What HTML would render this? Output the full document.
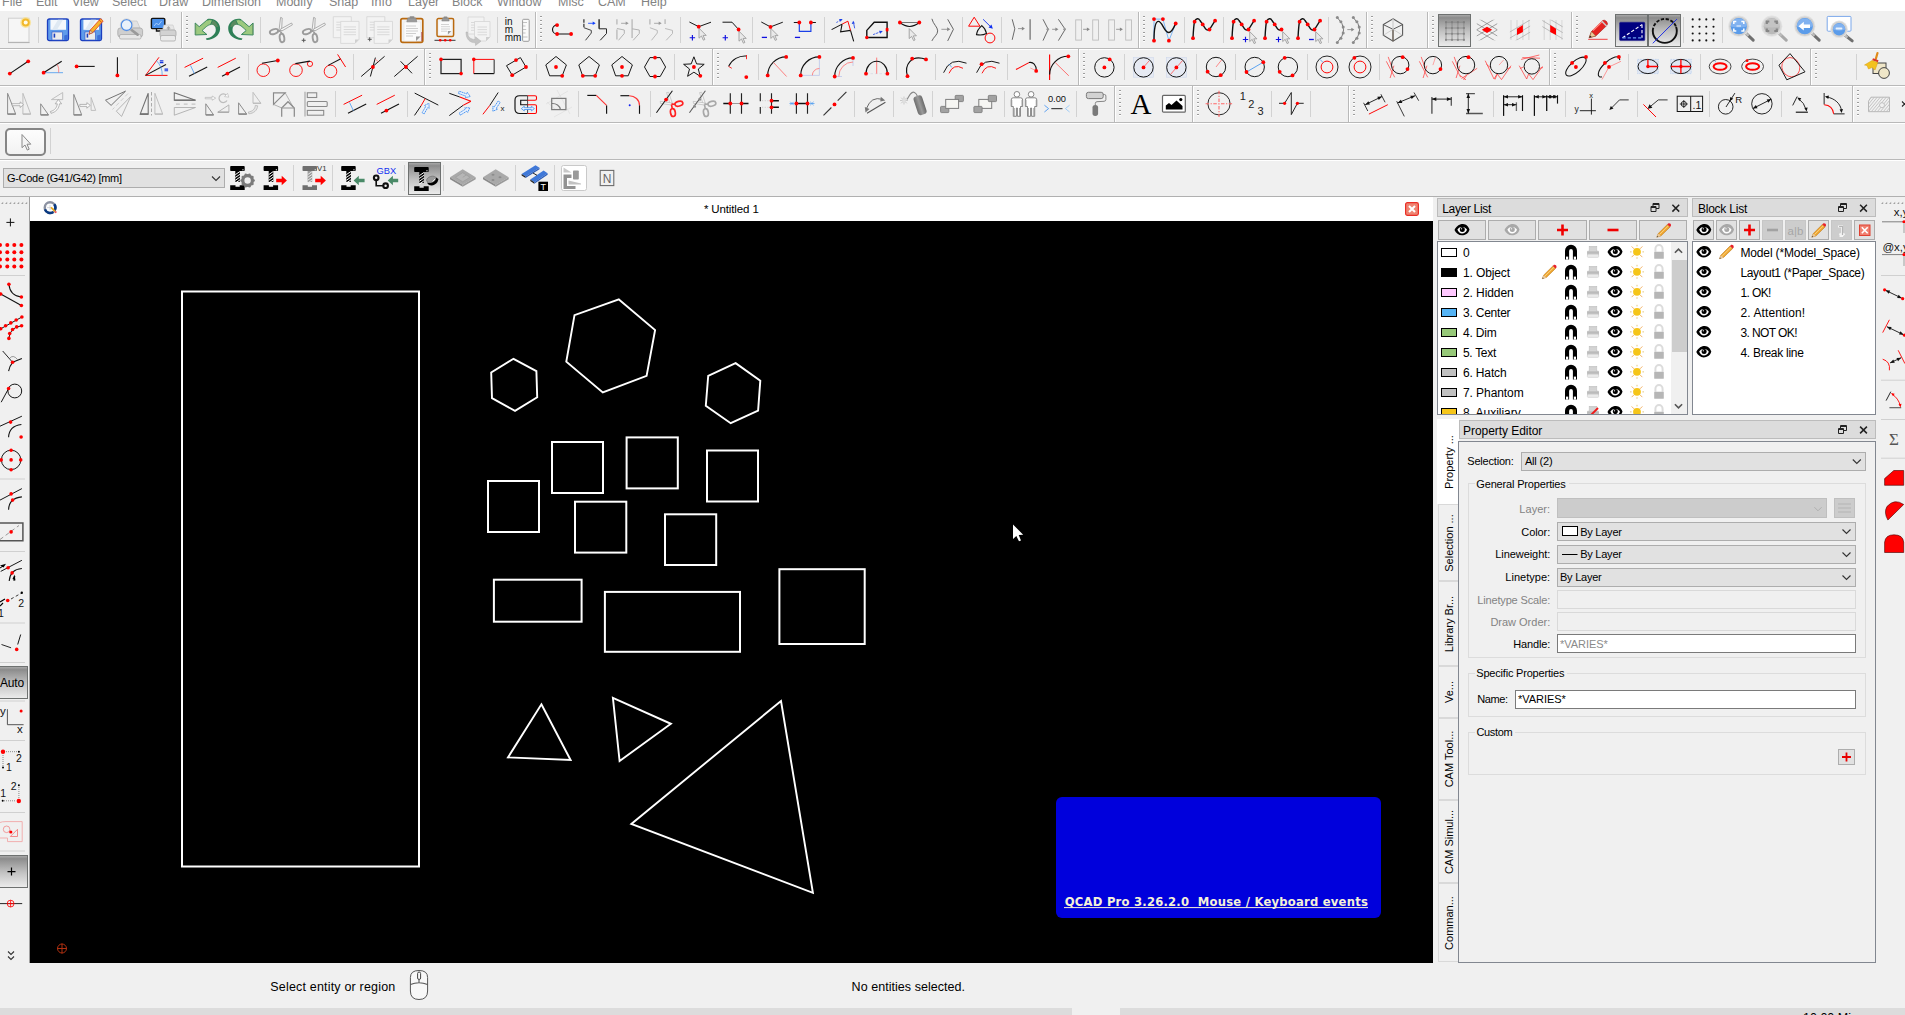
<!DOCTYPE html><html><head><meta charset="utf-8"><title>QCAD</title><style>
*{box-sizing:border-box;margin:0;padding:0}
html,body{width:1905px;height:1015px;overflow:hidden;background:#f0f0f0;font-family:"Liberation Sans",sans-serif;font-size:12px;color:#000}
.abs{position:absolute}
#menubar{position:absolute;left:0;top:0;width:1905px;height:11px;background:#fff;overflow:hidden}
#menubar span{position:absolute;top:-5px;font-size:12.5px;color:#838383;white-space:nowrap}
.hl{position:absolute;left:0;width:1905px;height:1px;background:#b9b9b9}
.hl2{position:absolute;left:0;width:1905px;height:1px;background:#fff}
.vs{position:absolute;width:1px;background:#b9b9b9;border-right:0}
.vs2{position:absolute;width:1px;background:#fff}
.sep{position:absolute;width:1px;height:26px;background:#d2d2d2}
.hd{position:absolute;width:2px;height:26px;background-image:repeating-linear-gradient(to bottom,#9c9c9c 0,#9c9c9c 1.5px,#fff 1.5px,#fff 2.5px,transparent 2.5px,transparent 4px)}
.pressed{position:absolute;border:1px solid #6e7170;background:linear-gradient(#a8a8a8 0,#8b8b8b 9%,#939393 14%,#c4c4c4 55%,#ebebeb 100%)}
#canvas{position:absolute;left:30px;top:221px;width:1403px;height:742px;background:#000}
#dochead{position:absolute;left:30px;top:197px;width:1403px;height:24px;background:#fff}
#doctitle{position:absolute;left:0;width:1403px;top:6px;text-align:center;font-size:11px;color:#000;letter-spacing:0px}
.ptitle{position:absolute;height:18px;background:#dcdcdc;border:1px solid #bcbcbc;font-size:12px;line-height:16px;padding-left:4px;white-space:nowrap}
.list{position:absolute;background:#fff;border:1px solid #828790;overflow:hidden}
.tbtn{position:absolute;height:20px;top:220px;background:#e1e1e1;border:1px solid #adadad}
.row{position:absolute;left:0;height:20px;line-height:20px;font-size:12px;white-space:nowrap}
.sw{position:absolute;left:3px;width:16px;height:9px;border:1px solid #000}
.lbl{position:absolute;font-size:11px;white-space:nowrap;text-align:right;color:#000}
.combo{position:absolute;background:#e1e1e1;border:1px solid #adadad;font-size:11px;line-height:17px;padding-left:4px;white-space:nowrap}
.edit{position:absolute;background:#fff;border:1px solid #7a7a7a;font-size:11px;line-height:17px;padding-left:3px;color:#000}
.grp{position:absolute;border:1px solid #dcdcdc}
.grp b{position:absolute;top:-8px;left:6px;background:#f0f0f0;padding:0 2px;font-weight:normal;font-size:11px;white-space:nowrap}
.vtab{position:absolute;left:1438px;width:20px;border:1px solid #d9d9d9;border-right:0;background:#f0f0f0}
.vtab span{position:absolute;left:50%;top:50%;transform:translate(-50%,-50%) rotate(-90deg);white-space:nowrap;font-size:11px}
</style></head><body><div id="menubar"><span style="left:2px">File</span><span style="left:36px">Edit</span><span style="left:72px">View</span><span style="left:112px">Select</span><span style="left:159px">Draw</span><span style="left:202px">Dimension</span><span style="left:276px">Modify</span><span style="left:329px">Snap</span><span style="left:371px">Info</span><span style="left:408px">Layer</span><span style="left:452px">Block</span><span style="left:497px">Window</span><span style="left:558px">Misc</span><span style="left:598px">CAM</span><span style="left:641px">Help</span></div><div class="hl" style="top:48px"></div><div class="hl2" style="top:49px"></div><div class="hl" style="top:85px"></div><div class="hl2" style="top:86px"></div><div class="hl" style="top:122px"></div><div class="hl2" style="top:123px"></div><div class="hl" style="top:159px"></div><div class="hl2" style="top:160px"></div><div class="hl" style="top:196px;background:#b0b0b0"></div><div class="sep" style="left:38px;top:17px"></div><div class="sep" style="left:110px;top:17px"></div><div class="vs" style="left:181px;top:12px;height:36px"></div><div class="vs2" style="left:182px;top:12px;height:36px"></div><div class="hd" style="left:186px;top:16px;height:28px"></div><div class="sep" style="left:260px;top:17px"></div><div class="sep" style="left:497px;top:17px"></div><div class="vs" style="left:535px;top:12px;height:36px"></div><div class="vs2" style="left:536px;top:12px;height:36px"></div><div class="hd" style="left:540px;top:16px;height:28px"></div><div class="sep" style="left:680px;top:17px"></div><div class="sep" style="left:752px;top:17px"></div><div class="sep" style="left:824px;top:17px"></div><div class="sep" style="left:962px;top:17px"></div><div class="sep" style="left:1001px;top:17px"></div><div class="vs" style="left:1138px;top:12px;height:36px"></div><div class="vs2" style="left:1139px;top:12px;height:36px"></div><div class="hd" style="left:1143px;top:16px;height:28px"></div><div class="sep" style="left:1184px;top:17px"></div><div class="sep" style="left:1223px;top:17px"></div><div class="sep" style="left:1328px;top:17px"></div><div class="vs" style="left:1366px;top:12px;height:36px"></div><div class="vs2" style="left:1367px;top:12px;height:36px"></div><div class="hd" style="left:1371px;top:16px;height:28px"></div><div class="vs" style="left:1427px;top:12px;height:36px"></div><div class="vs2" style="left:1428px;top:12px;height:36px"></div><div class="hd" style="left:1432px;top:16px;height:28px"></div><div class="pressed" style="left:1438px;top:14px;width:33px;height:33px"></div><div class="vs" style="left:1571px;top:12px;height:36px"></div><div class="vs2" style="left:1572px;top:12px;height:36px"></div><div class="hd" style="left:1576px;top:16px;height:28px"></div><div class="pressed" style="left:1615px;top:14px;width:33px;height:33px"></div><div class="pressed" style="left:1648px;top:14px;width:33px;height:33px"></div><div class="sep" style="left:1683px;top:17px"></div><div class="sep" style="left:1722px;top:17px"></div><div class="sep" style="left:137px;top:54px"></div><div class="sep" style="left:176px;top:54px"></div><div class="sep" style="left:248px;top:54px"></div><div class="sep" style="left:353px;top:54px"></div><div class="vs" style="left:424px;top:49px;height:36px"></div><div class="vs2" style="left:425px;top:49px;height:36px"></div><div class="hd" style="left:429px;top:53px;height:28px"></div><div class="sep" style="left:536px;top:54px"></div><div class="sep" style="left:674px;top:54px"></div><div class="vs" style="left:712px;top:49px;height:36px"></div><div class="vs2" style="left:713px;top:49px;height:36px"></div><div class="hd" style="left:717px;top:53px;height:28px"></div><div class="sep" style="left:758px;top:54px"></div><div class="sep" style="left:896px;top:54px"></div><div class="sep" style="left:935px;top:54px"></div><div class="sep" style="left:1007px;top:54px"></div><div class="vs" style="left:1078px;top:49px;height:36px"></div><div class="vs2" style="left:1079px;top:49px;height:36px"></div><div class="hd" style="left:1083px;top:53px;height:28px"></div><div class="sep" style="left:1124px;top:54px"></div><div class="sep" style="left:1196px;top:54px"></div><div class="sep" style="left:1235px;top:54px"></div><div class="sep" style="left:1307px;top:54px"></div><div class="sep" style="left:1379px;top:54px"></div><div class="vs" style="left:1549px;top:49px;height:36px"></div><div class="vs2" style="left:1550px;top:49px;height:36px"></div><div class="hd" style="left:1554px;top:53px;height:28px"></div><div class="sep" style="left:1628px;top:54px"></div><div class="sep" style="left:1700px;top:54px"></div><div class="sep" style="left:1772px;top:54px"></div><div class="vs" style="left:1810px;top:49px;height:36px"></div><div class="vs2" style="left:1811px;top:49px;height:36px"></div><div class="hd" style="left:1815px;top:53px;height:28px"></div><div class="sep" style="left:1856px;top:54px"></div><div class="sep" style="left:335px;top:91px"></div><div class="sep" style="left:407px;top:91px"></div><div class="sep" style="left:578px;top:91px"></div><div class="sep" style="left:650px;top:91px"></div><div class="sep" style="left:854px;top:91px"></div><div class="sep" style="left:893px;top:91px"></div><div class="sep" style="left:932px;top:91px"></div><div class="sep" style="left:1004px;top:91px"></div><div class="sep" style="left:1076px;top:91px"></div><div class="vs" style="left:1114px;top:86px;height:36px"></div><div class="vs2" style="left:1115px;top:86px;height:36px"></div><div class="hd" style="left:1119px;top:90px;height:28px"></div><div class="vs" style="left:1192px;top:86px;height:36px"></div><div class="vs2" style="left:1193px;top:86px;height:36px"></div><div class="hd" style="left:1197px;top:90px;height:28px"></div><div class="sep" style="left:1271px;top:91px"></div><div class="sep" style="left:1310px;top:91px"></div><div class="vs" style="left:1348px;top:86px;height:36px"></div><div class="vs2" style="left:1349px;top:86px;height:36px"></div><div class="hd" style="left:1353px;top:90px;height:28px"></div><div class="sep" style="left:1493px;top:91px"></div><div class="sep" style="left:1565px;top:91px"></div><div class="sep" style="left:1637px;top:91px"></div><div class="sep" style="left:1709px;top:91px"></div><div class="sep" style="left:1781px;top:91px"></div><div class="vs" style="left:1852px;top:86px;height:36px"></div><div class="vs2" style="left:1853px;top:86px;height:36px"></div><div class="hd" style="left:1857px;top:90px;height:28px"></div><div class="sep" style="left:293px;top:165px"></div><div class="sep" style="left:332px;top:165px"></div><div class="sep" style="left:404px;top:165px"></div><div class="pressed" style="left:408px;top:162px;width:33px;height:33px"></div><div class="sep" style="left:443px;top:165px"></div><div class="sep" style="left:515px;top:165px"></div><div class="sep" style="left:554px;top:165px"></div><div class="abs" style="left:5px;top:128px;width:41px;height:28px;border:2px solid #858585;border-radius:5px;background:linear-gradient(#fdfdfd,#f2f2f2)"></div><div class="sep" style="left:50px;top:128px"></div><div class="combo" style="left:3px;top:168px;width:222px;height:20px;font-size:11px;letter-spacing:-.3px;line-height:18px;padding-left:3px">G-Code (G41/G42) [mm]</div><svg class="abs" style="left:0;top:0" width="1905" height="197" viewBox="0 0 1905 197"><g transform="translate(7.0 18.0)"><defs><linearGradient id="pg" x1="0" y1="0" x2="1" y2="1"><stop offset="0" stop-color="#fff"/><stop offset="1" stop-color="#e4e4e4"/></linearGradient></defs><rect x="1.5" y="0.2" width="20.5" height="24" fill="#f6f6f6" stroke="#cfcfcf" stroke-width="1"/><path d="M1 24.6h21.5" stroke="#b0b0b0" stroke-width="1"/><circle cx="18.7" cy="4.5" r="5.4" fill="#f9e08a" opacity=".75"/><circle cx="18.7" cy="4.5" r="4" fill="#f2b92c"/><circle cx="18.7" cy="4.5" r="2" fill="#fffbe8"/></g><g transform="translate(46.0 18.0)"><rect x="1.5" y="1" width="21" height="21.6" rx="1.8" fill="#5f9bea" stroke="#1c3fbf" stroke-width="1.3"/><rect x="4.4" y="1.8" width="15.6" height="10" fill="#f4f8fc"/><path d="M6 11.8L12 1.8h5L11 11.8z" fill="#dfe9f3"/><rect x="6" y="14" width="10.5" height="8" fill="#ececec" stroke="#2a4fc8" stroke-width=".6"/><rect x="7.6" y="15.6" width="1.6" height="4" fill="#1c3fbf"/><path d="M18.2 17.5l3.5-1v5.5h-3.5z" fill="#3c6fd8"/></g><g transform="translate(79.0 18.0)"><rect x="1.5" y="1" width="21" height="21.6" rx="1.8" fill="#5f9bea" stroke="#1c3fbf" stroke-width="1.3"/><rect x="4.4" y="1.8" width="15.6" height="10" fill="#f4f8fc"/><path d="M6 11.8L12 1.8h5L11 11.8z" fill="#dfe9f3"/><rect x="6" y="14" width="10.5" height="8" fill="#ececec" stroke="#2a4fc8" stroke-width=".6"/><rect x="7.6" y="15.6" width="1.6" height="4" fill="#1c3fbf"/><path d="M18.2 17.5l3.5-1v5.5h-3.5z" fill="#3c6fd8"/><path d="M10 16.2l1.3-4.2L21.6 0.6l2.6 2.4L13.8 14.6z" fill="#f6b42c" stroke="#e0402a" stroke-width=".8"/><path d="M10 16.2l1.3-4.2 2.5 2.6z" fill="#e8c9a0" stroke="#a03020" stroke-width=".5"/><path d="M20.2 2.1l2.6 2.4" stroke="#e0402a" stroke-width="1"/></g><g transform="translate(118.0 18.0)"><path d="M3 10l3-7h13l3 7z" fill="#e2e2e2" stroke="#c4c4c4" stroke-width=".7"/><rect x="-0.2" y="10" width="24.8" height="9" rx="2.5" fill="#cfcfcf" stroke="#a8a8a8" stroke-width=".8"/><rect x="1.5" y="16.5" width="21.5" height="4.5" rx="1.5" fill="#e6e6e6" stroke="#ababab" stroke-width=".8"/><path d="M12.6 11.2l7 5.4" stroke="#9a9a9a" stroke-width="2.6" stroke-linecap="round"/><circle cx="8.6" cy="7.1" r="5.4" fill="#e9f1fa" stroke="#4b8be8" stroke-width="1.3"/><circle cx="8.6" cy="7.1" r="6.3" fill="none" stroke="#c9c9c9" stroke-width=".6"/></g><g transform="translate(151.0 18.0)"><rect x="0.4" y="0.4" width="13.4" height="10.2" rx="1.2" fill="#4a90ea" stroke="#111" stroke-width="1.4"/><path d="M3 8l2.5-3 2 2 3-4" stroke="#bcd8ff" stroke-width=".8" fill="none"/><path d="M5.5 11v2h4" stroke="#111" stroke-width="1.4" fill="none"/><path d="M11.5 12l1.5-5h9l1.5 5z" fill="#e6e6e6" stroke="#c8c8c8" stroke-width=".6"/><path d="M17.5 8l2.2 2.5h-1.4v2h-1.6v-2h-1.4z" fill="#a8a8a8"/><rect x="9" y="12" width="16" height="7" rx="2" fill="#d2d2d2" stroke="#a8a8a8" stroke-width=".8"/><rect x="9.5" y="17.5" width="15" height="5.5" rx="1.5" fill="#ebebeb" stroke="#ababab" stroke-width=".8"/></g><g transform="translate(195.0 18.0)"><path d="M12 1.200C19 -0.600 25.400 4.500 25.100 11C24.800 17.200 19 21.900 11.700 22L10.800 20.600C16.800 19.600 20.900 16 20.800 11.500C20.700 8 18.500 6.300 15.500 6.600z" fill="#2e8057"/><path d="M14.500 1.500C19 1.500 22.500 5 23 9L20 8.500C19 6.800 17.500 6.300 15.500 6.600L12.500 3z" fill="#5a8a60"/><path d="M0.200 5L4.200 8.700L11.800 2.200Q14.500 1 17.600 2L15.500 6.600C13.500 6.800 12 7.800 7.100 12.500L11.900 16.500L0.200 17z" fill="#9cc97f" stroke="#2e8057" stroke-width=".9" stroke-linejoin="miter"/><path d="M0.700 6V16.500" stroke="#6a9a68" stroke-width=".9"/></g><g transform="translate(229.0 18.0)"><g transform="translate(24.3 0) scale(-1 1)"><path d="M12 1.200C19 -0.600 25.400 4.500 25.100 11C24.800 17.200 19 21.900 11.700 22L10.800 20.600C16.800 19.600 20.900 16 20.800 11.500C20.700 8 18.500 6.300 15.500 6.600z" fill="#2e8057"/><path d="M14.500 1.500C19 1.500 22.500 5 23 9L20 8.500C19 6.800 17.500 6.300 15.500 6.600L12.500 3z" fill="#5a8a60"/><path d="M0.200 5L4.200 8.700L11.800 2.200Q14.500 1 17.600 2L15.500 6.600C13.500 6.800 12 7.800 7.100 12.500L11.900 16.500L0.200 17z" fill="#9cc97f" stroke="#2e8057" stroke-width=".9" stroke-linejoin="miter"/><path d="M0.700 6V16.500" stroke="#6a9a68" stroke-width=".9"/></g></g><g transform="translate(268.0 18.0)"><path d="M12.6 -0.6l1.6.6-.6 13-2.6-.6z" fill="#f4f4f4" stroke="#9c9c9c" stroke-width=".8"/><path d="M23.6 5l.8 1.8-10.600 6.200-1.600-1.700z" fill="#f4f4f4" stroke="#9c9c9c" stroke-width=".8"/><ellipse cx="6" cy="13.600" rx="4.300" ry="2.300" transform="rotate(-18 6 13.6)" fill="none" stroke="#9c9c9c" stroke-width="1.900"/><ellipse cx="14" cy="20" rx="2.300" ry="4.200" transform="rotate(-8 14 20)" fill="none" stroke="#9c9c9c" stroke-width="1.900"/><path d="M9.800 12.600l3 .8M13 14l.5 2" stroke="#9c9c9c" stroke-width="1.800"/></g><g transform="translate(301.0 18.0)"><path d="M12.6 -0.6l1.6.6-.6 13-2.6-.6z" fill="#f4f4f4" stroke="#9c9c9c" stroke-width=".8"/><path d="M23.6 5l.8 1.8-10.600 6.200-1.600-1.700z" fill="#f4f4f4" stroke="#9c9c9c" stroke-width=".8"/><ellipse cx="6" cy="13.600" rx="4.300" ry="2.300" transform="rotate(-18 6 13.6)" fill="none" stroke="#9c9c9c" stroke-width="1.900"/><ellipse cx="14" cy="20" rx="2.300" ry="4.200" transform="rotate(-8 14 20)" fill="none" stroke="#9c9c9c" stroke-width="1.900"/><path d="M9.800 12.600l3 .8M13 14l.5 2" stroke="#9c9c9c" stroke-width="1.800"/><path d="M0.700 22.300h4M2.700 20.300v4" stroke="#555" stroke-width="1"/></g><g transform="translate(334.0 18.0)"><path d="M-0.7 -1.3h18v17l-4 4h-14z" fill="#f3f3f3" stroke="#d4d4d4" stroke-width=".8"/><path d="M2.3 4.2h12" stroke="#d6d6d6" stroke-width=".9"/><path d="M2.3 6.800000000000001h12" stroke="#d6d6d6" stroke-width=".9"/><path d="M2.3 9.4h12" stroke="#d6d6d6" stroke-width=".9"/><path d="M2.3 12.0h12" stroke="#d6d6d6" stroke-width=".9"/><path d="M6.7 3.4h18.3v18l-4 4h-14.3z" fill="#f3f3f3" stroke="#d4d4d4" stroke-width=".8"/><path d="M25.0 21.4l-4 4v-4z" fill="#cfcfcf"/><path d="M9.7 8.9h12.3" stroke="#d6d6d6" stroke-width=".9"/><path d="M9.7 11.5h12.3" stroke="#d6d6d6" stroke-width=".9"/><path d="M9.7 14.100000000000001h12.3" stroke="#d6d6d6" stroke-width=".9"/><path d="M9.7 16.700000000000003h12.3" stroke="#d6d6d6" stroke-width=".9"/></g><g transform="translate(367.5 18.0)"><path d="M-0.7 -1.3h18v17l-4 4h-14z" fill="#f3f3f3" stroke="#d4d4d4" stroke-width=".8"/><path d="M2.3 4.2h12" stroke="#d6d6d6" stroke-width=".9"/><path d="M2.3 6.800000000000001h12" stroke="#d6d6d6" stroke-width=".9"/><path d="M2.3 9.4h12" stroke="#d6d6d6" stroke-width=".9"/><path d="M2.3 12.0h12" stroke="#d6d6d6" stroke-width=".9"/><path d="M6.7 3.4h18.3v18l-4 4h-14.3z" fill="#f3f3f3" stroke="#d4d4d4" stroke-width=".8"/><path d="M25.0 21.4l-4 4v-4z" fill="#cfcfcf"/><path d="M9.7 8.9h12.3" stroke="#d6d6d6" stroke-width=".9"/><path d="M9.7 11.5h12.3" stroke="#d6d6d6" stroke-width=".9"/><path d="M9.7 14.100000000000001h12.3" stroke="#d6d6d6" stroke-width=".9"/><path d="M9.7 16.700000000000003h12.3" stroke="#d6d6d6" stroke-width=".9"/><path d="M0.200 21.300h4M2.200 19.300v4" stroke="#555" stroke-width="1"/></g><g transform="translate(400.0 18.0)"><rect x="0.800" y="0.600" width="22" height="23.800" rx="1.800" fill="#f2f2f2" stroke="#b9690f" stroke-width="1.700"/><path d="M4 4h16.500v14.500l-4.500 4.500h-12z" fill="#fbfbfb" stroke="#e0e0e0" stroke-width=".5"/><path d="M20.500 18.500l-4.500 4.500 0-4.500z" fill="#9a9a9a"/><path d="M21.800 14v9" stroke="#a0303a" stroke-width=".8"/><path d="M6 8h10M6 10.500h12M6 13h12M6 15.500h10M6 18h7" stroke="#c9c9c9" stroke-width=".9"/><path d="M6.800 3.800l1-3.800h8l1 3.800z" fill="#9b9b9b" stroke="#7d7d7d" stroke-width=".6"/><rect x="9.500" y="-1.800" width="5" height="2" rx="1" fill="#8a8a8a"/></g><g transform="translate(433.0 18.0)"><rect x="4" y="0.600" width="16.600" height="17.800" rx="1.500" fill="#f2f2f2" stroke="#b9690f" stroke-width="1.500"/><path d="M6.200 3.500h12.200v9.500l-3.500 3.500h-8.700z" fill="#fbfbfb"/><path d="M18.400 13l-3.500 3.500v-3.500z" fill="#9a9a9a"/><path d="M8 6.500h8M8 8.700h9M8 11h9M8 13.200h6" stroke="#c9c9c9" stroke-width=".8"/><path d="M8.800 3l.8-3h5.800l.8 3z" fill="#9b9b9b" stroke="#7d7d7d" stroke-width=".5"/><rect x="10.500" y="-1.600" width="4" height="1.800" rx=".9" fill="#8a8a8a"/><path d="M1.500 22.300h21" stroke="#222" stroke-width=".9"/><circle cx="7.2" cy="22.3" r="1.3" fill="#f00"/><circle cx="12.2" cy="22.3" r="1.3" fill="#f00"/><circle cx="17.2" cy="22.3" r="1.3" fill="#f00"/></g><g transform="translate(466.0 18.0)"><path d="M2 -1h16v13l-4 4h-12z" fill="#f3f3f3" stroke="#d4d4d4" stroke-width=".8"/><path d="M5 4.5h10" stroke="#d6d6d6" stroke-width=".9"/><path d="M5 7.1h10" stroke="#d6d6d6" stroke-width=".9"/><path d="M5 9.7h10" stroke="#d6d6d6" stroke-width=".9"/><path d="M5 12.3h10" stroke="#d6d6d6" stroke-width=".9"/><path d="M8.5 3.5h15.5v15.5l-4 4h-11.5z" fill="#f3f3f3" stroke="#d4d4d4" stroke-width=".8"/><path d="M24.0 19.0l-4 4v-4z" fill="#cfcfcf"/><path d="M11.5 9.0h9.5" stroke="#d6d6d6" stroke-width=".9"/><path d="M11.5 11.6h9.5" stroke="#d6d6d6" stroke-width=".9"/><path d="M11.5 14.2h9.5" stroke="#d6d6d6" stroke-width=".9"/><path d="M11.5 16.8h9.5" stroke="#d6d6d6" stroke-width=".9"/><path d="M1.500 14c0 5 3 7.500 8 7.500v-2.700l5.500 4.400-5.500 4.300v-2.700c-6 0-9.500-3.800-9.500-10.800z" fill="#c4c4c4" stroke="#b0b0b0" stroke-width=".5"/></g><g transform="translate(505.0 18.0)"><text x="-0.3" y="7.1" font-size="10" fill="#111" text-anchor="start" font-weight="normal" font-family="Liberation Sans, sans-serif">in</text><text x="-0.3" y="15" font-size="10" fill="#111" text-anchor="start" font-weight="normal" font-family="Liberation Sans, sans-serif">m</text><text x="-0.3" y="22.9" font-size="10" fill="#111" text-anchor="start" font-weight="normal" font-family="Liberation Sans, sans-serif">mm</text><rect x="17.600" y="1.300" width="6.600" height="22" rx="1" fill="#fafafa" stroke="#9a9a9a" stroke-width="1"/><path d="M18 4.500h4M18 8h2.500M18 11.500h3.200M18 15h2.500M18 19h4.500" stroke="#aaa" stroke-width=".7"/></g><g transform="translate(550.0 18.0)"><path d="M7.100 7.100A4.600 4.450 0 0 0 7.100 16H21.100" stroke="#111" stroke-width="1.15" fill="none" /><circle cx="7.1" cy="7.1" r="1.9" fill="#f00"/><circle cx="7.1" cy="16" r="1.9" fill="#f00"/><circle cx="21.1" cy="16" r="1.9" fill="#f00"/></g><g transform="translate(583.0 18.0)"><path d="M0.900 1.300V9.700" stroke="#333" stroke-width="1.23" fill="none" stroke-dasharray="3.500 1"/><path d="M0.900 9.700L8.300 12.400V15L2.500 22.300" stroke="#333" stroke-width="0.9" fill="none" /><path d="M16.100 1.300V10.800" stroke="#222" stroke-width="1.39" fill="none" /><path d="M16.100 10.800H23.500V15.500L17.200 22.300" stroke="#222" stroke-width="0.98" fill="none" /><path d="M5.100 5.300H11" stroke="#1040ff" stroke-width="0.82" fill="none" /><path d="M12.700 5.300l-3-1.700v3.400z" fill="#1040ff"/></g><g transform="translate(616.0 18.0)"><path d="M0.900 1.300V6.500M0.900 11.500V21.500" stroke="#b8b8b8" stroke-width="1.31" fill="none" /><path d="M0.900 10.500L8.300 12V15.500L2.500 22.300" stroke="#b0b0b0" stroke-width="0.98" fill="none" /><path d="M16.100 1.300V20" stroke="#b8b8b8" stroke-width="1.31" fill="none" /><path d="M16.100 10.800L23.300 12V15.500L17.200 22.300" stroke="#b0b0b0" stroke-width="0.98" fill="none" /><path d="M5.100 5.300H11" stroke="#999" stroke-width="0.82" fill="none" /><path d="M12.700 5.300l-3-1.700v3.400z" fill="#999"/></g><g transform="translate(649.0 18.0)"><path d="M0.900 1.300V6.500" stroke="#b8b8b8" stroke-width="1.31" fill="none" /><path d="M0.900 9.700L8.300 12.400V15L2.500 22.300" stroke="#b8b8b8" stroke-width="0.98" fill="none" /><path d="M16.100 1.300V6" stroke="#b8b8b8" stroke-width="1.31" fill="none" /><path d="M16.100 10.500L23.500 12.400V15.500L17.200 22.300" stroke="#b8b8b8" stroke-width="0.98" fill="none" /><path d="M5.100 5.300H11" stroke="#999" stroke-width="0.82" fill="none" /><path d="M12.700 5.300l-3-1.700v3.400z" fill="#999"/></g><g transform="translate(687.0 18.0)"><path d="M2.400 4L11.700 8.700L24 4.200" stroke="#111" stroke-width="0.98" fill="none" /><path transform="translate(12 10.2) scale(0.95)" d="M0 0V10.500L2.600 8.200 4.600 12.600 6.200 11.900 4.300 7.600H7.600z" fill="#e9e9e9" stroke="#9a9a9a" stroke-width=".9"/><circle cx="11.7" cy="8.7" r="1.9" fill="#f00"/><path d="M2.7 19.7H8.100000000000001M5.4 17.0V22.4" stroke="#1010e0" stroke-width="1.15"/></g><g transform="translate(720.0 18.0)"><path d="M2.500 4.200H12L18.600 11.500" stroke="#111" stroke-width="0.98" fill="none" /><path transform="translate(19 13.2) scale(0.95)" d="M0 0V10.500L2.600 8.200 4.600 12.600 6.200 11.900 4.300 7.600H7.600z" fill="#e9e9e9" stroke="#9a9a9a" stroke-width=".9"/><circle cx="18.6" cy="11.5" r="1.9" fill="#f00"/><path d="M2.5999999999999996 19.7H8.0M5.3 17.0V22.4" stroke="#1010e0" stroke-width="1.15"/></g><g transform="translate(760.0 18.0)"><path d="M1.300 4L10.500 8.900L22.800 4.200" stroke="#111" stroke-width="0.98" fill="none" /><path transform="translate(10.8 10.4) scale(0.95)" d="M0 0V10.500L2.600 8.200 4.600 12.600 6.200 11.900 4.300 7.600H7.600z" fill="#e9e9e9" stroke="#9a9a9a" stroke-width=".9"/><circle cx="10.5" cy="8.9" r="1.9" fill="#f00"/><path d="M1.8000000000000003 19.4H7.0" stroke="#1010e0" stroke-width="1.3"/></g><g transform="translate(793.0 18.0)"><path d="M0.800 4.500H6.300M17.900 4.500H22.900" stroke="#111" stroke-width="0.98" fill="none" /><path d="M6.300 4.500V13.400H17.900V4.500" stroke="#1b40e8" stroke-width="1.15" fill="none" /><circle cx="6.3" cy="4.5" r="1.9" fill="#f00"/><circle cx="17.9" cy="4.5" r="1.9" fill="#f00"/><path d="M1.9 19.4H7.1" stroke="#1010e0" stroke-width="1.3"/></g><g transform="translate(832.0 18.0)"><path d="M-0.400 11.600L10.100 6.100M18.500 12.400L21.700 23.400M10.100 6.100L8.600 13.900L18.500 12.400" stroke="#111" stroke-width="1.07" fill="none" /><path d="M10.100 6.100L15.900 3.200L18.500 12.400" stroke="#f00" stroke-width="0.98" fill="none" /><path d="M4.400 4.500L8.500 2.300" stroke="#1b40e8" stroke-width="0.82" fill="none" stroke-dasharray="2 1"/><path d="M10.600 1l-3.600 0 1.600 2.800z" fill="#1b40e8"/><path d="M22.700 10.300L21.700 5.500" stroke="#1b40e8" stroke-width="0.82" fill="none" /><path d="M21.200 2.800l-1.500 3.200 3.100-.5z" fill="#1b40e8"/></g><g transform="translate(865.0 18.0)"><path d="M1.800 19.500V12.400L9.200 4.300H22.100V19.500z" stroke="#111" stroke-width="1.39" fill="none" /><circle cx="1.8" cy="19.5" r="1.7" fill="#f00"/><rect x="20.700" y="9.800" width="2.800" height="3.600" rx="1" fill="#f00"/><path d="M8.100 16.600L14.500 14.200" stroke="#1b40e8" stroke-width="0.82" fill="none" stroke-dasharray="2.400 .8"/><path d="M17.800 13.100l-3.800-.4 1.200 3.100z" fill="#1b40e8"/></g><g transform="translate(898.0 18.0)"><path d="M1.900 4.500H21.300" stroke="#333" stroke-width="0.66" fill="none" /><path d="M1.900 4.500Q11.600 12.400 21.300 4.500" stroke="#111" stroke-width="1.07" fill="none" /><path transform="translate(11.2 10.6) scale(0.95)" d="M0 0V10.500L2.600 8.200 4.600 12.600 6.200 11.900 4.300 7.600H7.600z" fill="#e9e9e9" stroke="#9a9a9a" stroke-width=".9"/><circle cx="1.9" cy="4.5" r="1.9" fill="#f00"/><circle cx="21.3" cy="4.5" r="1.9" fill="#f00"/></g><g transform="translate(930.0 18.0)"><path d="M1.900 0.800C3 6 7.700 9 7.700 12.900S3.500 19 1.900 22.900" stroke="#555" stroke-width="0.9" fill="none" /><path d="M17.700 1.300L23.400 11.300L17.700 22.900" stroke="#555" stroke-width="0.9" fill="none" /><path d="M11.400 11.300H19" stroke="#888" stroke-width="0.82" fill="none" /><path d="M20.300 11.300l-3.200-2v4z" fill="#888"/></g><g transform="translate(969.0 18.0)"><path d="M5.200 -0.800L-0.400 8.200H10.900z" stroke="#f00" stroke-width="0.98" fill="none" /><path d="M12.800 7.600Q8.200 11.500 7.500 16.600Q13 17.800 17.500 15.500Q16.500 10.500 12.800 7.600z" stroke="#111" stroke-width="1.15" fill="none" /><circle cx="21" cy="20" r="4.9" stroke="#f00" stroke-width="0.98" fill="none"/><path d="M14.100 1.300L21.500 8.600" stroke="#1030f0" stroke-width="0.9" fill="none" /><path d="M23.800 10.800l-1.300-4.300-3 3z" fill="#1030f0"/></g><g transform="translate(1009.0 18.0)"><path d="M3.200 1.300L5.800 10.800L3.200 21.800" stroke="#666" stroke-width="0.98" fill="none" /><path d="M9 10.600H14.500" stroke="#888" stroke-width="0.82" fill="none" /><path d="M15.900 10.600l-3-1.900v3.800z" fill="#888"/><path d="M21.100 1.300V21.800" stroke="#666" stroke-width="1.15" fill="none" /></g><g transform="translate(1042.0 18.0)"><path d="M1 1.300L6.200 11.300L1 22.600" stroke="#666" stroke-width="0.98" fill="none" /><path d="M16.400 1.300L23.200 11.300L16.400 22.600" stroke="#666" stroke-width="0.98" fill="none" /><path d="M10.100 11.300H15" stroke="#888" stroke-width="0.82" fill="none" /><path d="M16.400 11.300l-3-1.900v3.800z" fill="#888"/><circle cx="5.800" cy="11.300" r="1.300" fill="#999"/><circle cx="22.600" cy="11.300" r="1.300" fill="#999"/></g><g transform="translate(1075.0 18.0)"><rect x="0.7" y="1.9" width="5.8" height="20.2" stroke="#bdbdbd" stroke-width="0.9" fill="none" rx="0"/><rect x="17.7" y="1.9" width="5.8" height="20.2" stroke="#bdbdbd" stroke-width="0.9" fill="none" rx="0"/><path d="M8.100 11.300H13.500" stroke="#888" stroke-width="0.82" fill="none" /><path d="M14.900 11.300l-3-1.900v3.800z" fill="#888"/></g><g transform="translate(1108.0 18.0)"><rect x="0.7" y="1.9" width="5.8" height="20.2" stroke="#bdbdbd" stroke-width="0.9" fill="none" rx="0"/><rect x="17.7" y="1.9" width="5.8" height="20.2" stroke="#bdbdbd" stroke-width="0.9" fill="none" rx="0"/><path d="M8.100 11.300H13.500" stroke="#888" stroke-width="0.82" fill="none" /><path d="M14.900 11.300l-3-1.900v3.800z" fill="#888"/></g><g transform="translate(1153.0 18.0)"><path d="M1 22.700V1.100H9.900L15.900 22.700L22.700 5.500" stroke="#64a8f4" stroke-width="0.82" fill="none" /><path d="M1 22.700C1 12 2 3.400 5.400 3.400C9.500 3.400 11 14.500 15.900 14.500C19 14.500 21 9 22.700 5.500" stroke="#111" stroke-width="1.39" fill="none" /><circle cx="1" cy="1.1" r="1.9" fill="#f00"/><circle cx="9.9" cy="1.1" r="1.9" fill="#f00"/><circle cx="22.7" cy="5.5" r="1.9" fill="#f00"/><circle cx="1" cy="22.7" r="1.9" fill="#f00"/><circle cx="15.9" cy="22.7" r="1.9" fill="#f00"/></g><g transform="translate(1192.0 18.0)"><path d="M1 20.200C1.500 10 1.800 6 2.600 3.700C4 0 6.500 0 8 2.500L10.700 6.400C13 10 14.500 13.500 17.500 11.500L23.100 2.700" stroke="#111" stroke-width="1.39" fill="none" /><circle cx="1" cy="20.2" r="1.9" fill="#f00"/><circle cx="2.6" cy="3.7" r="1.9" fill="#f00"/><circle cx="10.7" cy="6.4" r="1.9" fill="#f00"/><circle cx="17.5" cy="11.5" r="1.9" fill="#f00"/><circle cx="23.1" cy="2.7" r="1.9" fill="#f00"/></g><g transform="translate(1231.0 18.0)"><path d="M1 20.200C1.500 10 1.800 6 2.600 3.700C4 0 6.500 0 8 2.500L10.700 6.400C13 10 14.500 13.500 17.500 11.500L23.100 2.700" stroke="#111" stroke-width="1.39" fill="none" /><path transform="translate(18.7 13.6) scale(0.95)" d="M0 0V10.500L2.600 8.200 4.600 12.600 6.200 11.900 4.300 7.600H7.600z" fill="#e9e9e9" stroke="#9a9a9a" stroke-width=".9"/><circle cx="1" cy="20.2" r="1.9" fill="#f00"/><circle cx="2.6" cy="3.7" r="1.9" fill="#f00"/><circle cx="10.7" cy="6.4" r="1.9" fill="#f00"/><circle cx="17.5" cy="11.5" r="1.9" fill="#f00"/><circle cx="23.1" cy="2.7" r="1.9" fill="#f00"/><path d="M11.8 21.5H17.2M14.5 18.8V24.2" stroke="#1010e0" stroke-width="1.15"/></g><g transform="translate(1264.0 18.0)"><path d="M1 20.200C1.500 10 1.800 6 2.600 3.700C4 0 6.500 0 8 2.500L10.700 6.400C13 10 14.500 13.500 17.500 11.500" stroke="#111" stroke-width="1.39" fill="none" /><path transform="translate(18.7 13.6) scale(0.95)" d="M0 0V10.500L2.600 8.200 4.600 12.600 6.200 11.900 4.300 7.600H7.600z" fill="#e9e9e9" stroke="#9a9a9a" stroke-width=".9"/><circle cx="1" cy="20.2" r="1.9" fill="#f00"/><circle cx="2.6" cy="3.7" r="1.9" fill="#f00"/><circle cx="10.7" cy="6.4" r="1.9" fill="#f00"/><circle cx="17.5" cy="11.5" r="1.9" fill="#f00"/><path d="M11.8 21.5H17.2M14.5 18.8V24.2" stroke="#1010e0" stroke-width="1.15"/></g><g transform="translate(1297.0 18.0)"><path d="M1 20.200C1.500 10 1.800 6 2.600 3.700C4 0 6.500 0 8 2.500L10.700 6.400C13 10 14.500 13.500 17.500 11.500L23.100 2.700" stroke="#111" stroke-width="1.39" fill="none" /><path transform="translate(18.7 13.6) scale(0.95)" d="M0 0V10.500L2.600 8.200 4.600 12.600 6.200 11.900 4.300 7.600H7.600z" fill="#e9e9e9" stroke="#9a9a9a" stroke-width=".9"/><circle cx="1" cy="20.2" r="1.9" fill="#f00"/><circle cx="2.6" cy="3.7" r="1.9" fill="#f00"/><circle cx="10.7" cy="6.4" r="1.9" fill="#f00"/><circle cx="17.5" cy="11.5" r="1.9" fill="#f00"/><circle cx="23.1" cy="2.7" r="1.9" fill="#f00"/><path d="M12.0 21.5H16.8" stroke="#1010e0" stroke-width="1.3"/></g><g transform="translate(1336.0 18.0)"><path d="M1.3 -0.500Q13.9 11.800 1.3 24.400" stroke="#777" stroke-width="0.98" fill="none" /><circle cx="1.3" cy="-0.5" r="1.500" fill="#8a8a8a"/><circle cx="4.9" cy="3.7" r="1.500" fill="#8a8a8a"/><circle cx="7.2" cy="9" r="1.500" fill="#8a8a8a"/><circle cx="7.2" cy="15" r="1.500" fill="#8a8a8a"/><circle cx="4.9" cy="20.3" r="1.500" fill="#8a8a8a"/><circle cx="1.3" cy="24.4" r="1.500" fill="#8a8a8a"/><path d="M17.3 -0.500Q29.9 11.800 17.3 24.400" stroke="#777" stroke-width="0.98" fill="none" /><circle cx="17.3" cy="-0.5" r="1.500" fill="#8a8a8a"/><circle cx="20.900000000000002" cy="3.7" r="1.500" fill="#8a8a8a"/><circle cx="23.200000000000003" cy="9" r="1.500" fill="#8a8a8a"/><circle cx="23.200000000000003" cy="15" r="1.500" fill="#8a8a8a"/><circle cx="20.900000000000002" cy="20.3" r="1.500" fill="#8a8a8a"/><circle cx="17.3" cy="24.4" r="1.500" fill="#8a8a8a"/><path d="M11.300 11.600H17" stroke="#888" stroke-width="0.82" fill="none" /><path d="M18.300 11.600l-3-1.900v3.800z" fill="#888"/></g><g transform="translate(1381.0 18.0)"><path d="M12 0.800L21.600 6.600V17.300L12 23.200L2.300 17.300V6.600z" stroke="#555" stroke-width="1.07" fill="none" /><path d="M12 11.300L2.300 6.600M12 11.300L21.600 6.600" stroke="#555" stroke-width="0.98" fill="none" /><path d="M12 11.300V23.200" stroke="#6b625a" stroke-width="1.56" fill="none" /><path d="M12 0.800V11.300" stroke="#cfcfcf" stroke-width="1.23" fill="none" /><path d="M12 11.300L2.300 17.300M12 11.300L21.600 17.300" stroke="#bdbdbd" stroke-width="0.66" fill="none" /></g><g transform="translate(1442.0 18.0)"><path d="M4 3V23M3 4.2H23" stroke="#7c7c7c" stroke-width="0.66" fill="none" /><path d="M10 3V23M3 10H23" stroke="#7c7c7c" stroke-width="0.66" fill="none" /><path d="M15.9 3V23M3 15.8H23" stroke="#7c7c7c" stroke-width="0.66" fill="none" /><path d="M21.9 3V23M3 21.8H23" stroke="#7c7c7c" stroke-width="0.66" fill="none" /><rect x="3" y="3.2" width="2" height="2" fill="#777" opacity=".5"/><rect x="3" y="9" width="2" height="2" fill="#777" opacity=".5"/><rect x="3" y="14.8" width="2" height="2" fill="#777" opacity=".5"/><rect x="3" y="20.8" width="2" height="2" fill="#777" opacity=".5"/><rect x="9" y="3.2" width="2" height="2" fill="#777" opacity=".5"/><rect x="9" y="9" width="2" height="2" fill="#777" opacity=".5"/><rect x="9" y="14.8" width="2" height="2" fill="#777" opacity=".5"/><rect x="9" y="20.8" width="2" height="2" fill="#777" opacity=".5"/><rect x="14.9" y="3.2" width="2" height="2" fill="#777" opacity=".5"/><rect x="14.9" y="9" width="2" height="2" fill="#777" opacity=".5"/><rect x="14.9" y="14.8" width="2" height="2" fill="#777" opacity=".5"/><rect x="14.9" y="20.8" width="2" height="2" fill="#777" opacity=".5"/><rect x="20.9" y="3.2" width="2" height="2" fill="#777" opacity=".5"/><rect x="20.9" y="9" width="2" height="2" fill="#777" opacity=".5"/><rect x="20.9" y="14.8" width="2" height="2" fill="#777" opacity=".5"/><rect x="20.9" y="20.8" width="2" height="2" fill="#777" opacity=".5"/></g><g transform="translate(1475.0 18.0)"><defs><clipPath id="isoc"><rect x="1.800" y="1.700" width="20.400" height="20.600"/></clipPath></defs><g clip-path="url(#isoc)"><path d="M0 -1.6L24 12.8M0 12.8L24 -1.6" stroke="#666" stroke-width="0.57" fill="none" /><path d="M0 4.6L24 19.0M0 19.0L24 4.6" stroke="#666" stroke-width="0.57" fill="none" /><path d="M0 10.8L24 25.200000000000003M0 25.200000000000003L24 10.8" stroke="#666" stroke-width="0.57" fill="none" /></g><path d="M6.800 11.800L12 8.700L17.200 11.800L12 14.900z" fill="#f00"/></g><g transform="translate(1508.0 18.0)"><g clip-path="url(#isoc)"><path d="M3 2V22" stroke="#d0d0d0" stroke-width="0.9" fill="none" /><path d="M9 2V22" stroke="#d0d0d0" stroke-width="0.9" fill="none" /><path d="M14.9 2V22" stroke="#d0d0d0" stroke-width="0.9" fill="none" /><path d="M20.9 2V22" stroke="#d0d0d0" stroke-width="0.9" fill="none" /><path d="M1.500 14.2L22.500 1.6999999999999993" stroke="#8a8a8a" stroke-width="0.49" fill="none" /><path d="M1.500 20.3L22.500 7.800000000000001" stroke="#8a8a8a" stroke-width="0.49" fill="none" /><path d="M1.500 26.4L22.500 13.899999999999999" stroke="#8a8a8a" stroke-width="0.49" fill="none" /></g><path d="M9 10.800L14.900 7.100V13.900L9 16.900z" fill="#f00"/></g><g transform="translate(1540.5 18.0)"><g clip-path="url(#isoc)"><path d="M3.7 2V22" stroke="#d0d0d0" stroke-width="0.9" fill="none" /><path d="M9.7 2V22" stroke="#d0d0d0" stroke-width="0.9" fill="none" /><path d="M15.5 2V22" stroke="#d0d0d0" stroke-width="0.9" fill="none" /><path d="M21.5 2V22" stroke="#d0d0d0" stroke-width="0.9" fill="none" /><path d="M1.500 -3.5L22.500 9.0" stroke="#8a8a8a" stroke-width="0.49" fill="none" /><path d="M1.500 2.3L22.500 14.8" stroke="#8a8a8a" stroke-width="0.49" fill="none" /><path d="M1.500 8.4L22.500 20.9" stroke="#8a8a8a" stroke-width="0.49" fill="none" /></g><path d="M9.700 7.100L15.500 10.800V16.900L9.700 13.900z" fill="#f00"/></g><g transform="translate(1586.0 18.0)"><path d="M2.200 21.300H21.600" stroke="#f04040" stroke-width="1"/><path d="M3.200 19.700L5.500 13.500L16.500 2.500Q18.500 1.500 20.500 3.500Q22.300 5.500 21 7.300L9.800 18z" fill="#e52320" stroke="#a01512" stroke-width=".6"/><path d="M7 12.500L17 2.800" stroke="#ff8a80" stroke-width="1.300"/><path d="M3.200 19.700L5.500 13.500L9.800 18z" fill="#e9c99a" stroke="#8a5a30" stroke-width=".5"/><path d="M3.200 19.700l.9-2.300 1.600 1.500z" fill="#222"/><path d="M15.800 3.200L20.600 8" stroke="#c9c9c9" stroke-width="1.600"/></g><g transform="translate(1620.0 18.0)"><rect x="-0.400" y="4.200" width="25.200" height="18.400" rx="1" fill="#000080" stroke="#22228a" stroke-width=".6"/><path d="M2.500 19.800L22 6.600" stroke="#fff" stroke-width="1.100" stroke-dasharray="3.300 2"/><path d="M22 6.600V19.800" stroke="#fff" stroke-width="1.100" stroke-dasharray="3.300 2"/><path d="M2.500 19.800H22" stroke="#6a9cf0" stroke-width="1.300" stroke-dasharray="3.200 2"/></g><g transform="translate(1652.8 18.0)"><g transform="translate(0 .9)"><path d="M0 12A12 12 0 0 0 24 12A12 12 0 0 0 23.300 8" stroke="#111" stroke-width="1.89" fill="none" /><path d="M0 12A12 12 0 0 1 23.300 8" stroke="#111" stroke-width="1.89" fill="none" stroke-dasharray="3.300 1.600"/><path d="M0 24.400L24.100 0.200" stroke="#1020e8" stroke-width="0.9" fill="none" /></g></g><g transform="translate(1691.0 18.0)"><circle cx="1.7" cy="1.4" r="1.050" fill="#111"/><circle cx="1.7" cy="8.7" r="1.050" fill="#111"/><circle cx="1.7" cy="15.5" r="1.050" fill="#111"/><circle cx="1.7" cy="22.4" r="1.050" fill="#111"/><circle cx="8.5" cy="1.4" r="1.050" fill="#111"/><circle cx="8.5" cy="8.7" r="1.050" fill="#111"/><circle cx="8.5" cy="15.5" r="1.050" fill="#111"/><circle cx="8.5" cy="22.4" r="1.050" fill="#111"/><circle cx="15.3" cy="1.4" r="1.050" fill="#111"/><circle cx="15.3" cy="8.7" r="1.050" fill="#111"/><circle cx="15.3" cy="15.5" r="1.050" fill="#111"/><circle cx="15.3" cy="22.4" r="1.050" fill="#111"/><circle cx="22.5" cy="1.4" r="1.050" fill="#111"/><circle cx="22.5" cy="8.7" r="1.050" fill="#111"/><circle cx="22.5" cy="15.5" r="1.050" fill="#111"/><circle cx="22.5" cy="22.4" r="1.050" fill="#111"/></g><g transform="translate(1729.0 18.0)"><path d="M17.0 15.399999999999999L24.2 22.2" stroke="#6f6f6f" stroke-width="3" stroke-linecap="round"/><path d="M16.0 14.399999999999999L19.5 17.9" stroke="#bcbcbc" stroke-width="2.400"/><circle cx="9.8" cy="8.2" r="10.6" fill="#e2e2e2"/><circle cx="9.8" cy="8.2" r="9.7" fill="#cfcfcf"/><circle cx="9.8" cy="8.2" r="8.1" fill="#5b9cea"/><path d="M1.7000000000000006 8.5A8.1 8.1 0 0 1 17.900000000000002 8.5Q9.8 10.7 1.7000000000000006 8.5z" fill="#8db9f2" opacity=".75"/><path d="M4.800 6V3.500H7.300M12.300 3.500H14.800V6M14.800 10.500V13H12.300M7.300 13H4.800V10.500" stroke="#fff" stroke-width="1.500" fill="none"/><path d="M7.500 8h4.500" stroke="#cfe2fb" stroke-width="1.500"/></g><g transform="translate(1762.0 18.0)"><path d="M17.0 15.399999999999999L24.2 22.2" stroke="#a8a8a8" stroke-width="3" stroke-linecap="round"/><path d="M16.0 14.399999999999999L19.5 17.9" stroke="#bcbcbc" stroke-width="2.400"/><circle cx="9.8" cy="8.2" r="10.6" fill="#e2e2e2"/><circle cx="9.8" cy="8.2" r="9.7" fill="#d8d8d8"/><circle cx="9.8" cy="8.2" r="8.1" fill="#b9b9b9"/><path d="M1.7000000000000006 8.5A8.1 8.1 0 0 1 17.900000000000002 8.5Q9.8 10.7 1.7000000000000006 8.5z" fill="#c8c8c8" opacity=".75"/><path d="M4.800 6V3.500H7.300M12.300 3.500H14.800V6M14.800 10.500V13H12.300M7.300 13H4.800V10.500" stroke="#868686" stroke-width="2.200" fill="none"/></g><g transform="translate(1795.0 18.0)"><path d="M17.0 15.399999999999999L24.2 22.2" stroke="#6f6f6f" stroke-width="3" stroke-linecap="round"/><path d="M16.0 14.399999999999999L19.5 17.9" stroke="#bcbcbc" stroke-width="2.400"/><circle cx="9.8" cy="8.2" r="10.6" fill="#e2e2e2"/><circle cx="9.8" cy="8.2" r="9.7" fill="#cfcfcf"/><circle cx="9.8" cy="8.2" r="8.1" fill="#5b9cea"/><path d="M1.7000000000000006 8.5A8.1 8.1 0 0 1 17.900000000000002 8.5Q9.8 10.7 1.7000000000000006 8.5z" fill="#8db9f2" opacity=".75"/><path d="M3.500 8.200L8.800 3.800V6.500H15V10H8.800V12.600z" fill="#fff"/></g><g transform="translate(1828.0 18.0)"><rect x="-0.800" y="-1.600" width="23.800" height="14.800" rx="1" fill="#fff" stroke="#7aa7ea" stroke-width="1"/><path d="M16.932 17.132L24.2 22.9" stroke="#6f6f6f" stroke-width="3" stroke-linecap="round"/><path d="M15.931999999999999 16.132L19.432 19.632" stroke="#bcbcbc" stroke-width="2.400"/><circle cx="11.1" cy="11.3" r="8.7" fill="#e2e2e2"/><circle cx="11.1" cy="11.3" r="7.8" fill="#cfcfcf"/><circle cx="11.1" cy="11.3" r="6.199999999999999" fill="#5b9cea"/><path d="M4.9 11.600000000000001A6.199999999999999 6.199999999999999 0 0 1 17.3 11.600000000000001Q11.1 13.8 4.9 11.600000000000001z" fill="#8db9f2" opacity=".75"/><path d="M8.500 10.500h5" stroke="#e8f1fd" stroke-width="1.800" stroke-linecap="round"/></g><g transform="translate(7.0 55.0)"><path d="M2.8 18.6L21.2 6.3" stroke="#111" stroke-width="1.07" fill="none"/><circle cx="2.8" cy="18.6" r="1.9" fill="#f00"/><circle cx="21.2" cy="6.3" r="1.9" fill="#f00"/></g><g transform="translate(40.0 55.0)"><path d="M3.6 17.7L23 17.7" stroke="#4a9af0" stroke-width="0.82" fill="none"/><path d="M3.6 17.7L21.7 6.3" stroke="#111" stroke-width="1.07" fill="none"/><path d="M17.300 9.300Q19.300 13 18.700 17.700" stroke="#f66" stroke-width="0.74" fill="none" /><circle cx="3.6" cy="17.7" r="1.9" fill="#f00"/></g><g transform="translate(73.0 55.0)"><path d="M3.6 11.4L21.7 11.4" stroke="#111" stroke-width="1.07" fill="none"/><circle cx="3.6" cy="11.4" r="1.9" fill="#f00"/></g><g transform="translate(106.0 55.0)"><path d="M11.4 2.3L11.4 20.4" stroke="#111" stroke-width="1.07" fill="none"/><circle cx="11.4" cy="20.4" r="1.9" fill="#f00"/></g><g transform="translate(145.0 55.0)"><path d="M14 2.300L0.500 20.400H22.500" stroke="#f00" stroke-width="0.98" fill="none" /><path d="M0.5 20.4L21 9.5" stroke="#111" stroke-width="1.07" fill="none"/><path d="M11.500 5.600Q17.500 12 17.200 20.400" stroke="#4a9af0" stroke-width="0.74" fill="none" /><path d="M14.800 5.900h3.600M14.800 7.600h3.600M19.500 14.100h3.600M19.500 15.800h3.600" stroke="#1535e0" stroke-width="1.100"/></g><g transform="translate(184.0 55.0)"><path d="M0.6 12.4L19.1 3.2" stroke="#f00" stroke-width="0.98" fill="none"/><path d="M5 21.2L23.2 12" stroke="#111" stroke-width="1.07" fill="none"/><path d="M6.5 10.4L10.4 18.7" stroke="#4a9af0" stroke-width="0.82" fill="none"/></g><g transform="translate(217.0 55.0)"><path d="M0.7 12.4L18.8 3.2" stroke="#f00" stroke-width="0.98" fill="none"/><path d="M5 21.2L23 12" stroke="#111" stroke-width="1.07" fill="none"/><circle cx="10.4" cy="18.6" r="1.9" fill="#f00"/></g><g transform="translate(256.0 55.0)"><circle cx="7.3" cy="15.2" r="6.3" stroke="#f00" stroke-width="0.9" fill="none"/><path d="M6 8.2L21.8 5.5" stroke="#111" stroke-width="1.07" fill="none"/><circle cx="21.8" cy="5.5" r="1.9" fill="#f00"/></g><g transform="translate(289.0 55.0)"><circle cx="7" cy="15.2" r="6.3" stroke="#f00" stroke-width="0.9" fill="none"/><circle cx="21" cy="8.9" r="2.6" stroke="#f00" stroke-width="0.9" fill="none"/><path d="M6.4 8.6L20.9 6.1" stroke="#111" stroke-width="1.07" fill="none"/></g><g transform="translate(322.0 55.0)"><circle cx="8.5" cy="16.4" r="6.3" stroke="#f00" stroke-width="0.9" fill="none"/><path d="M6.2 10.4L18.8 3.8" stroke="#111" stroke-width="1.07" fill="none"/><path d="M15.6 -0.6L23.6 12" stroke="#f00" stroke-width="0.98" fill="none"/></g><g transform="translate(361.0 55.0)"><path d="M0.2 21.5L23.6 1.3" stroke="#111" stroke-width="0.98" fill="none"/><path d="M9.4 21.5L14.4 2.6" stroke="#111" stroke-width="0.98" fill="none"/><path d="M14 4L17.700 7" stroke="#f77" stroke-width="0.74" fill="none" /><circle cx="11.9" cy="12" r="1.9" fill="#f00"/></g><g transform="translate(394.0 55.0)"><path d="M0.3 21.5L23.6 1.3" stroke="#111" stroke-width="0.98" fill="none"/><path d="M6.6 6.3L18 18.3" stroke="#111" stroke-width="0.98" fill="none"/><circle cx="12" cy="12" r="1.9" fill="#f00"/></g><g transform="translate(439.0 55.0)"><rect x="2" y="4.4" width="20.1" height="14.2" stroke="#222" stroke-width="1.23" fill="none" rx="0"/><circle cx="2" cy="4.4" r="1.8" fill="#f00"/><circle cx="22.1" cy="18.6" r="1.8" fill="#f00"/></g><g transform="translate(472.0 55.0)"><path d="M1.800 18.600V4.400H22.200" stroke="#f00" stroke-width="0.98" fill="none" /><path d="M1.800 18.600H22.200" stroke="#111" stroke-width="1.15" fill="none" /><path d="M22.200 4.400V18.600" stroke="#555" stroke-width="1.31" fill="none" /><circle cx="1.8" cy="4.4" r="1.8" fill="#f00"/></g><g transform="translate(505.0 55.0)"><path d="M1.500 10.700L15.400 2.600L21 12L7.200 20.200z" stroke="#111" stroke-width="0.98" fill="none" /><circle cx="11" cy="5.1" r="1.9" fill="#f00"/><circle cx="21" cy="12" r="1.9" fill="#f00"/><circle cx="7.2" cy="20.2" r="1.9" fill="#f00"/></g><g transform="translate(544.0 55.0)"><path d="M12 1.500L22.400 9.900L18.200 20.800H5.600L1.800 9.900z" stroke="#111" stroke-width="0.98" fill="none" /><circle cx="12" cy="12" r="1.9" fill="#f00"/><circle cx="18.2" cy="20.8" r="1.9" fill="#f00"/></g><g transform="translate(577.0 55.0)"><path d="M12 1.500L22.400 9.900L18.200 20.800H5.600L1.800 9.900z" stroke="#111" stroke-width="0.98" fill="none" /><circle cx="5.8" cy="20.8" r="1.9" fill="#f00"/><circle cx="18.2" cy="20.8" r="1.9" fill="#f00"/></g><g transform="translate(610.0 55.0)"><path d="M12 1.500L22.400 9.900L18.200 20.800H5.600L1.800 9.900z" stroke="#111" stroke-width="0.98" fill="none" /><circle cx="12" cy="12" r="1.9" fill="#f00"/><circle cx="12" cy="20.8" r="1.9" fill="#f00"/></g><g transform="translate(643.0 55.0)"><path d="M1.500 12L6.900 2.600H17.200L22.600 12L17.200 21.500H6.900z" stroke="#111" stroke-width="0.98" fill="none" /><circle cx="12" cy="2.6" r="1.9" fill="#f00"/><circle cx="12" cy="21.5" r="1.9" fill="#f00"/></g><g transform="translate(682.0 55.0)"><path d="M11.9 1.8L14.6 8.9L22.2 9.3L16.3 14.0L18.2 21.3L11.9 17.2L5.6 21.3L7.5 14.0L1.6 9.3L9.2 8.9z" stroke="#111" stroke-width="0.98" fill="none" /><circle cx="11.9" cy="12" r="1.9" fill="#f00"/><circle cx="18.3" cy="20.8" r="1.9" fill="#f00"/></g><g transform="translate(727.0 55.0)"><path d="M1.600 11.400A18 18 0 0 1 19.500 1" stroke="#111" stroke-width="1.07" fill="none" /><path d="M19.500 0V4.200M1.600 11.400L4.800 13.300" stroke="#f00" stroke-width="0.82" fill="none" /><circle cx="19.3" cy="22.1" r="1.9" fill="#f00"/></g><g transform="translate(766.0 55.0)"><path d="M1.700 20.400A18.500 18.500 0 0 1 20.200 1.900" stroke="#111" stroke-width="1.15" fill="none" /><path d="M7.6 7.6L20.6 21.5" stroke="#f66" stroke-width="0.82" fill="none"/><circle cx="1.7" cy="20.4" r="1.9" fill="#f00"/><circle cx="20.2" cy="1.9" r="1.9" fill="#f00"/></g><g transform="translate(799.0 55.0)"><path d="M1.700 20.400H20.400V1.900" stroke="#b9c3ea" stroke-width="0.74" fill="none" /><path d="M13.300 20.400A7 7 0 0 1 20.400 13.500" stroke="#f66" stroke-width="0.74" fill="none" /><path d="M1.700 20.400A18.500 18.500 0 0 1 20.400 1.900" stroke="#111" stroke-width="1.15" fill="none" /><circle cx="1.7" cy="20.4" r="1.9" fill="#f00"/><circle cx="20.4" cy="1.9" r="1.9" fill="#f00"/></g><g transform="translate(832.0 55.0)"><path d="M2.700 21.500H10M21 2.900V11" stroke="#b9c3ea" stroke-width="0.74" fill="none" /><path d="M6.800 21.500A14.200 14.500 0 0 1 21 7" stroke="#f66" stroke-width="0.74" fill="none" /><path d="M2.700 21.500A18.300 18.600 0 0 1 21 2.900" stroke="#111" stroke-width="1.15" fill="none" /><circle cx="2.7" cy="21.5" r="1.9" fill="#f00"/><circle cx="21" cy="2.9" r="1.9" fill="#f00"/></g><g transform="translate(865.0 55.0)"><path d="M1 18.700H22.400" stroke="#d6d6e2" stroke-width="0.74" fill="none" stroke-dasharray="2.500 2"/><path d="M11.7 2.6L11.7 18.7" stroke="#f77" stroke-width="0.98" fill="none"/><path d="M1 18.700A10.700 12.500 0 0 1 22.400 18.700" stroke="#111" stroke-width="1.15" fill="none" /><circle cx="1" cy="18.7" r="1.9" fill="#f00"/><circle cx="22.4" cy="18.7" r="1.9" fill="#f00"/></g><g transform="translate(905.0 55.0)"><path d="M2.500 21.200C-1 10 6 -1 21 4.400" stroke="#111" stroke-width="1.15" fill="none" /><circle cx="2.5" cy="21.2" r="1.9" fill="#f00"/><circle cx="7.2" cy="3.6" r="1.9" fill="#f00"/><circle cx="21" cy="4.4" r="1.9" fill="#f00"/></g><g transform="translate(944.0 55.0)"><path d="M-0.400 17.700Q6 1.500 22.500 8.200" stroke="#111" stroke-width="0.98" fill="none" /><path d="M5 18.300Q9.500 8 19 13.300" stroke="#f00" stroke-width="0.9" fill="none" /><path d="M4.9 9.1L8 12.5" stroke="#4a9af0" stroke-width="0.82" fill="none"/></g><g transform="translate(976.0 55.0)"><path d="M0.600 17.700Q7 1.500 23.500 8.200" stroke="#111" stroke-width="0.98" fill="none" /><path d="M6 18.300Q10.500 8 20 13.300" stroke="#f00" stroke-width="0.9" fill="none" /><circle cx="5.6" cy="9.2" r="1.9" fill="#f00"/></g><g transform="translate(1015.0 55.0)"><path d="M1 14.5L13.9 7.6" stroke="#f00" stroke-width="1.07" fill="none"/><path d="M13.900 7.600C18 6.500 21.500 10 21.400 15.800" stroke="#111" stroke-width="1.07" fill="none" /><path d="M21.4 15.8L15.3 13" stroke="#f88" stroke-width="0.74" fill="none"/><circle cx="21.2" cy="15.9" r="1.9" fill="#f00"/></g><g transform="translate(1048.0 55.0)"><path d="M1.6 -0.6L1.6 25" stroke="#f00" stroke-width="1.15" fill="none"/><path d="M1.600 19.600A18.500 18.500 0 0 1 20.300 1.300" stroke="#111" stroke-width="1.15" fill="none" /><path d="M7.3 7.6L20.8 20.8" stroke="#f55" stroke-width="0.82" fill="none"/><circle cx="20.3" cy="1.3" r="1.9" fill="#f00"/></g><g transform="translate(1092.0 55.0)"><circle cx="12.4" cy="12.4" r="9.7" stroke="#111" stroke-width="0.98" fill="none"/><circle cx="12.4" cy="12.4" r="1.9" fill="#f00"/><circle cx="17.7" cy="4.4" r="1.9" fill="#f00"/></g><g transform="translate(1131.0 55.0)"><rect x="2.400" y="2.600" width="20.200" height="19.600" fill="#e6eaf3" stroke="#cdd7ec" stroke-width=".6"/><circle cx="12.5" cy="12.4" r="9.7" stroke="#111" stroke-width="0.98" fill="none"/><path d="M12.5 12.4L18.2 5.7" stroke="#f66" stroke-width="0.82" fill="none"/><circle cx="12.5" cy="12.4" r="1.9" fill="#f00"/></g><g transform="translate(1164.0 55.0)"><rect x="2.400" y="2.600" width="20.200" height="19.600" fill="#e6eaf3" stroke="#cdd7ec" stroke-width=".6"/><circle cx="12.4" cy="12.4" r="9.7" stroke="#111" stroke-width="0.98" fill="none"/><path d="M6.7 19.2L18.4 5.7" stroke="#f55" stroke-width="0.82" fill="none"/><circle cx="12.4" cy="12.4" r="1.9" fill="#f00"/></g><g transform="translate(1204.0 55.0)"><circle cx="12" cy="12" r="9.7" stroke="#111" stroke-width="0.98" fill="none"/><path d="M12 12L17.5 5" stroke="#f66" stroke-width="0.74" fill="none"/><circle cx="3.6" cy="16.7" r="1.9" fill="#f00"/><circle cx="16.7" cy="20.2" r="1.9" fill="#f00"/></g><g transform="translate(1243.0 55.0)"><circle cx="11.7" cy="12" r="9.7" stroke="#111" stroke-width="0.98" fill="none"/><path d="M3.5 17L20.3 7.2" stroke="#4a9af0" stroke-width="0.9" fill="none"/><circle cx="3.5" cy="17" r="1.9" fill="#f00"/><circle cx="20.3" cy="7.2" r="1.9" fill="#f00"/></g><g transform="translate(1276.0 55.0)"><circle cx="11.9" cy="12" r="9.7" stroke="#111" stroke-width="0.98" fill="none"/><circle cx="8.7" cy="2.8" r="1.9" fill="#f00"/><circle cx="3.7" cy="16.8" r="1.9" fill="#f00"/><circle cx="16.5" cy="20.4" r="1.9" fill="#f00"/></g><g transform="translate(1315.0 55.0)"><circle cx="12" cy="12" r="11" stroke="#111" stroke-width="0.9" fill="none"/><circle cx="12" cy="12" r="5.9" stroke="#f00" stroke-width="0.98" fill="none"/><path d="M5 4.4L8.2 7.6" stroke="#4a9af0" stroke-width="0.82" fill="none"/></g><g transform="translate(1348.0 55.0)"><circle cx="12" cy="12" r="11" stroke="#111" stroke-width="0.9" fill="none"/><circle cx="12" cy="12" r="5.9" stroke="#f00" stroke-width="0.98" fill="none"/><circle cx="6.4" cy="2.8" r="1.9" fill="#f00"/></g><g transform="translate(1387.0 55.0)"><path d="M-0.7 6.3L7.7 22.3" stroke="#f33" stroke-width="0.7" fill="none"/><path d="M1.2 1.9L5 12.6" stroke="#f33" stroke-width="0.7" fill="none"/><path d="M6.9 10.7L3.1 23" stroke="#f33" stroke-width="0.7" fill="none"/><circle cx="13.2" cy="10.1" r="8.7" stroke="#111" stroke-width="0.98" fill="none"/><circle cx="15.7" cy="2.2" r="1.9" fill="#f00"/><circle cx="20.5" cy="14.1" r="1.9" fill="#f00"/></g><g transform="translate(1420.0 55.0)"><path d="M-0.7 6.3L7.7 22.3" stroke="#f33" stroke-width="0.7" fill="none"/><path d="M1.2 1.9L5 12.6" stroke="#f33" stroke-width="0.7" fill="none"/><path d="M6.9 10.7L3.1 23" stroke="#f33" stroke-width="0.7" fill="none"/><circle cx="12.9" cy="10.1" r="8.7" stroke="#111" stroke-width="0.98" fill="none"/><path d="M12.9 10.1L15.4 2.6" stroke="#f88" stroke-width="0.74" fill="none"/><circle cx="20.5" cy="14.1" r="1.9" fill="#f00"/></g><g transform="translate(1453.0 55.0)"><path d="M-0.7 6.3L7.7 22.3" stroke="#f33" stroke-width="0.7" fill="none"/><path d="M1.2 1.9L5 12.6" stroke="#f33" stroke-width="0.7" fill="none"/><path d="M6.9 10.7L3.1 23" stroke="#f33" stroke-width="0.7" fill="none"/><path d="M8.5 23.5L24.2 13.3" stroke="#f33" stroke-width="0.7" fill="none"/><path d="M7 20.5L13 24.8" stroke="#f33" stroke-width="0.7" fill="none"/><path d="M10.5 25L13.5 20.5" stroke="#f33" stroke-width="0.7" fill="none"/><circle cx="13" cy="10.1" r="8.7" stroke="#111" stroke-width="0.98" fill="none"/><circle cx="15.5" cy="2.2" r="1.9" fill="#f00"/></g><g transform="translate(1486.0 55.0)"><path d="M-0.8 5.7L8 24L11.1 18.9L15.5 24.6L25 10.7" stroke="#f33" stroke-width="0.7" fill="none" /><path d="M0.5 9.5L4.5 12.5" stroke="#f33" stroke-width="0.7" fill="none"/><path d="M9 24.5L11 19.5" stroke="#f33" stroke-width="0.7" fill="none"/><path d="M21 14L24.8 12.5" stroke="#f33" stroke-width="0.7" fill="none"/><circle cx="13" cy="10.1" r="8.7" stroke="#111" stroke-width="0.98" fill="none"/><path d="M13 10.1L17.6 5" stroke="#f88" stroke-width="0.74" fill="none"/></g><g transform="translate(1519.0 55.0)"><path d="M0.2 10.7L7.7 24L9.6 18.9L14 24.6L23.5 11.4" stroke="#f33" stroke-width="0.7" fill="none" /><path d="M2.1 4.4L20.3 0" stroke="#f33" stroke-width="0.7" fill="none"/><path d="M3.3 2.6L21 3.2" stroke="#f33" stroke-width="0.7" fill="none"/><path d="M1 13.5L4.5 12" stroke="#f33" stroke-width="0.7" fill="none"/><path d="M20.5 13.5L24 12.5" stroke="#f33" stroke-width="0.7" fill="none"/><circle cx="12.8" cy="11.4" r="7.7" stroke="#111" stroke-width="0.98" fill="none"/></g><g transform="translate(1564.0 55.0)"><ellipse cx="11.9" cy="11.6" rx="12.8" ry="5.4" stroke="#111" stroke-width="1.07" fill="none" transform="rotate(-42 11.9 11.6)"/><circle cx="22" cy="1.9" r="1.9" fill="#f00"/><circle cx="8.1" cy="7.9" r="1.9" fill="#f00"/><circle cx="11.9" cy="12" r="1.9" fill="#f00"/></g><g transform="translate(1597.0 55.0)"><path d="M21.900 1.900C14 1 2 12 1.300 19C1 21.500 3 22.500 5 21.800" stroke="#111" stroke-width="1.07" fill="none" /><path d="M21.900 1.900L22.800 5" stroke="#111" stroke-width="1.07" fill="none" /><path d="M12 11.900L24 6.300M12 11.900L5 24.500" stroke="#f77" stroke-width="0.74" fill="none" /><circle cx="21.9" cy="1.9" r="1.9" fill="#f00"/><circle cx="7.9" cy="7.9" r="1.9" fill="#f00"/><circle cx="12" cy="11.9" r="1.9" fill="#f00"/></g><g transform="translate(1636.0 55.0)"><rect x="1.600" y="4.400" width="20.700" height="14.200" fill="#dfe6f3" stroke="#9fc0ee" stroke-width=".5" stroke-dasharray="1.500 1"/><ellipse cx="11.9" cy="11.5" rx="9.9" ry="7.1" stroke="#111" stroke-width="0.98" fill="none"/><path d="M11.900 11.500V4.500M11.900 11.500H21.800" stroke="#f00" stroke-width="1.31" fill="none" /><circle cx="11.9" cy="11.5" r="1.7" fill="#f00"/></g><g transform="translate(1669.0 55.0)"><rect x="1.600" y="4.400" width="20.700" height="14.200" fill="#dfe6f3" stroke="#9fc0ee" stroke-width=".5" stroke-dasharray="1.500 1"/><ellipse cx="11.9" cy="11.5" rx="9.9" ry="7.1" stroke="#111" stroke-width="0.98" fill="none"/><path d="M11.900 4.500V18.500M2 11.500H21.800" stroke="#f00" stroke-width="1.31" fill="none" /><circle cx="11.9" cy="11.5" r="1.7" fill="#f00"/></g><g transform="translate(1708.0 55.0)"><ellipse cx="12.1" cy="11.5" rx="10.9" ry="7.4" stroke="#333" stroke-width="0.9" fill="none"/><ellipse cx="12.1" cy="11.5" rx="6.5" ry="3.3" stroke="#f00" stroke-width="2.05" fill="none"/><path d="M6.5 5.8L8 7.2" stroke="#4a9af0" stroke-width="0.74" fill="none"/></g><g transform="translate(1740.5 55.0)"><ellipse cx="12.1" cy="11.5" rx="10.9" ry="7.4" stroke="#333" stroke-width="0.9" fill="none"/><ellipse cx="12.1" cy="11.5" rx="6.5" ry="3.3" stroke="#f00" stroke-width="2.05" fill="none"/><circle cx="6.6" cy="5.7" r="1.4" fill="#f00"/></g><g transform="translate(1780.0 55.0)"><ellipse cx="10.8" cy="12.2" rx="8.8" ry="9.8" stroke="#f44" stroke-width="0.82" fill="none" transform="rotate(-25 10.8 12.2)"/><path d="M10 -1.400L25 16.800L6.800 24.800L-1 10.200z" stroke="#111" stroke-width="0.98" fill="none" /></g><g transform="translate(1864.0 55.0)"><rect x="9" y="8" width="13" height="10.500" fill="#efe6c8" stroke="#444" stroke-width="1"/><circle cx="20" cy="18" r="5.400" fill="#efe6c8" stroke="#444" stroke-width="1"/><path d="M13.500 -2L11.800 4" stroke="#e08a18" stroke-width="2.200" stroke-linecap="round"/><path d="M9 3.200L14.500 5.300L13.800 7.300L8.200 5.200z" fill="#d9342a"/><path d="M8 5.500L13.800 7.600L11 15L8 12.500L4.500 14L3 10.500L0.500 10z" fill="#f3c21e" stroke="#d79a10" stroke-width=".5"/></g><g transform="translate(7.0 92.0)"><path d="M0.6 1.3L0.6 22.1L8.7 22.1z" stroke="#8a8a8a" stroke-width="0.98" fill="none" /><path d="M0.600 22.100H8.700" stroke="#8a8a8a" stroke-width="1.48" fill="none" /><path d="M15.9 1.3L15.9 22.1L23.7 22.1z" stroke="#bdbdbd" stroke-width="0.98" fill="none" /><path d="M15.900 22.100H23.700" stroke="#bdbdbd" stroke-width="1.31" fill="none" /><path d="M5.1 11.7H13.100000000000001V9.899999999999999L16.6 12.7L13.100000000000001 15.5V13.7H5.1z" fill="#fafafa" stroke="#a4a4a4" stroke-width=".8"/></g><g transform="translate(40.0 92.0)"><path d="M0.7 11.8L0.7 22.9L8.5 22.9z" stroke="#8a8a8a" stroke-width="0.98" fill="none" /><path d="M0.700 22.900H8.500" stroke="#8a8a8a" stroke-width="1.48" fill="none" /><path d="M11.4 7.6L22.7 0.5L22.7 7.6z" stroke="#bdbdbd" stroke-width="0.98" fill="none" /><path d="M10.400 19.500C15 18.500 17 15 17.300 11.800H15.200L18.400 7.500L21.600 11.800H19.500C19 16.500 16 20 11 21.300z" fill="#fafafa" stroke="#a4a4a4" stroke-width=".8"/></g><g transform="translate(72.5 92.0)"><path d="M1.3 2.4L1.3 22.9L9.2 22.9z" stroke="#8a8a8a" stroke-width="0.98" fill="none" /><path d="M1.300 22.900H9.200" stroke="#8a8a8a" stroke-width="1.48" fill="none" /><path d="M18.6 5.5L18.6 18.4L23.2 18.4z" stroke="#bdbdbd" stroke-width="0.98" fill="none" /><path d="M7.3 12.4H14.3V10.600000000000001L17.8 13.4L14.3 16.2V14.4H7.3z" fill="#fafafa" stroke="#a4a4a4" stroke-width=".8"/></g><g transform="translate(106.0 92.0)"><path d="M-0.5 8.2L19.5 -0.8L5.1 13.4z" stroke="#707070" stroke-width="0.98" fill="none" /><path d="M24.7 4.5L10.3 19.2L15.6 24.4z" stroke="#a8a8a8" stroke-width="0.82" fill="none" /><path d="M22 1.500L6.500 17.500" stroke="#c0c0c0" stroke-width="0.74" fill="none" stroke-dasharray="4 2.500"/></g><g transform="translate(139.0 92.0)"><path d="M9.2 1.3L9.2 22.1L1.2 22.1z" stroke="#707070" stroke-width="1.07" fill="none" /><path d="M1.200 22.100H9.200" stroke="#707070" stroke-width="1.48" fill="none" /><path d="M12.500 0V23.500" stroke="#9a9a9a" stroke-width="0.82" fill="none" stroke-dasharray="3.500 2"/><path d="M15.9 1.3L15.9 22.1L23.7 22.1z" stroke="#bdbdbd" stroke-width="0.98" fill="none" /><path d="M15.900 22.100H23.700" stroke="#bdbdbd" stroke-width="1.31" fill="none" /></g><g transform="translate(172.5 92.0)"><path d="M1.8 0.8L1.8 8.2L23 8.2z" stroke="#707070" stroke-width="1.07" fill="none" /><path d="M1.800 8.200H23" stroke="#707070" stroke-width="1.39" fill="none" /><path d="M3.500 12.100H23.500" stroke="#c4c4c4" stroke-width="1.31" fill="none" stroke-dasharray="3.800 4"/><path d="M1.8 15.5L23 15.5L1.8 23.2z" stroke="#a8a8a8" stroke-width="0.82" fill="none" /></g><g transform="translate(205.0 92.0)"><path d="M0.200 5.400H7.200V4L10.700 6.100L7.200 8.200V6.800H0.200z" fill="#fafafa" stroke="#b4b4b4" stroke-width=".7"/><path d="M22 8.500A4.300 4.300 0 1 1 21.500 3.300" stroke="#bcbcbc" stroke-width="1.23" fill="none" /><path d="M19.500 4.600L23.800 5.200L22.500 1.300z" fill="#fafafa" stroke="#b4b4b4" stroke-width=".6"/><path d="M0.8 11.8L0.8 22.9L8.6 22.9z" stroke="#8a8a8a" stroke-width="0.98" fill="none" /><path d="M0.800 22.900H8.600" stroke="#8a8a8a" stroke-width="1.48" fill="none" /><path d="M12.8 20.2L23.9 12.9L23.9 20.2z" stroke="#a8a8a8" stroke-width="0.82" fill="none" /><path d="M12.800 20.200H23.900" stroke="#a8a8a8" stroke-width="1.31" fill="none" /></g><g transform="translate(238.0 92.0)"><path d="M0.6 10.8L0.6 22.1L8.7 22.1z" stroke="#8a8a8a" stroke-width="0.98" fill="none" /><path d="M0.600 22.100H8.700" stroke="#8a8a8a" stroke-width="1.48" fill="none" /><path d="M15 0.3L15 11.3L22.9 11.3z" stroke="#bdbdbd" stroke-width="0.98" fill="none" /><path d="M15 11.300H22.900" stroke="#bdbdbd" stroke-width="1.31" fill="none" /><path d="M10.300 20C14.500 19.500 17 17 17.300 13.400L19.700 13.800C19.300 18.500 15.500 21.500 10.800 21.800z" fill="#e4e4e4" stroke="#b0b0b0" stroke-width=".7"/></g><g transform="translate(271.5 92.0)"><path d="M2 0.800H13.700L2 12.400z" stroke="#8a8a8a" stroke-width="1.15" fill="none" /><path d="M13.700 0.800L22.500 16.600M2 12.400L10.400 16" stroke="#9a9a9a" stroke-width="0.74" fill="none" /><path d="M10.200 24.700V16L16.500 9.700L22.800 16V24.700" stroke="#8a8a8a" stroke-width="1.23" fill="none" /><path d="M10.200 16H22.800" stroke="#a0a0a0" stroke-width="1.15" fill="none" /></g><g transform="translate(304.0 92.0)"><path d="M1 -0.200V24.400" stroke="#b0b0b0" stroke-width="1.31" fill="none" /><rect x="3.3" y="0.8" width="9.4" height="4.7" stroke="#8a8a8a" stroke-width="1.07" fill="none" rx="0"/><rect x="3.3" y="9.5" width="19.9" height="5" stroke="#8a8a8a" stroke-width="1.07" fill="none" rx="1"/><rect x="3.3" y="18.4" width="16.4" height="4.8" stroke="#8a8a8a" stroke-width="1.07" fill="none" rx="0"/></g><g transform="translate(343.0 92.0)"><path d="M0.6 12.4L19.1 3.2" stroke="#f00" stroke-width="0.98" fill="none"/><path d="M5 21.2L23.2 12" stroke="#111" stroke-width="1.07" fill="none"/><path d="M6.5 10.4L10.4 18.7" stroke="#4a9af0" stroke-width="0.82" fill="none"/></g><g transform="translate(376.0 92.0)"><path d="M0.7 12.4L18.8 3.2" stroke="#f00" stroke-width="0.98" fill="none"/><path d="M5 21.2L23 12" stroke="#111" stroke-width="1.07" fill="none"/><circle cx="10.4" cy="18.6" r="1.9" fill="#f00"/></g><g transform="translate(415.0 92.0)"><path d="M-0.3 1.1L23.3 13.1" stroke="#111" stroke-width="0.98" fill="none"/><path d="M-0.5 23.4L6 13.9" stroke="#111" stroke-width="0.98" fill="none"/><path d="M6 13.9L10.2 6.6" stroke="#f00" stroke-width="0.98" fill="none"/><path d="M9.1 21.9L12.8 15.5L14.2 16.3L13.9 11.3L9.4 13.5L10.8 14.3L7.1 20.7z" fill="#eaf2fd" stroke="#3f8ff0" stroke-width=".9" stroke-dasharray="1.600 .500"/></g><g transform="translate(448.0 92.0)"><path d="M1.3 1.3L11.8 5" stroke="#111" stroke-width="0.98" fill="none"/><path d="M11.8 5L22.9 9.2" stroke="#f00" stroke-width="1.07" fill="none"/><path d="M1.3 23.6L15 13.4" stroke="#111" stroke-width="0.98" fill="none"/><path d="M15 13.4L22.9 9.2" stroke="#f00" stroke-width="1.07" fill="none"/><path d="M10.4 1.4L17.9 4.2L17.4 5.7L22.3 4.5L19.3 0.4L18.8 1.9L11.2 -0.8z" fill="#eaf2fd" stroke="#3f8ff0" stroke-width=".9" stroke-dasharray="1.600 .500"/><path d="M12.4 23.1L18.9 19.1L19.7 20.4L21.8 15.8L16.8 15.7L17.6 17.0L11.2 21.1z" fill="#eaf2fd" stroke="#3f8ff0" stroke-width=".9" stroke-dasharray="1.600 .500"/></g><g transform="translate(481.0 92.0)"><path d="M17.2 0.5L8.8 13.4" stroke="#111" stroke-width="0.98" fill="none"/><path d="M8.8 13.4L1.9 22.3" stroke="#f00" stroke-width="0.98" fill="none"/><path d="M17.2 9.0L13.2 15.0L11.9 14.2L11.9 19.2L16.6 17.2L15.2 16.4L19.2 10.4z" fill="#eaf2fd" stroke="#3f8ff0" stroke-width=".9" stroke-dasharray="1.600 .500"/><text x="19.5" y="19" font-size="8" fill="#222" text-anchor="start" font-weight="normal" font-family="Liberation Sans, sans-serif">x</text></g><g transform="translate(514.0 92.0)"><path d="M13.600 3.700H5.500Q1 3.700 1 8V17Q1 21.500 6 21.500H13.600" stroke="#111" stroke-width="1.15" fill="none" /><path d="M13.600 8.200H6.700V12.700H13.600" stroke="#111" stroke-width="1.15" fill="none" /><path d="M13.600 3.700V21.500" stroke="#222" stroke-width="0.82" fill="none" /><path d="M13.600 3.700H21Q22.500 3.700 22.500 5V7Q22.500 8.200 21 8.200H13.600M13.600 12.700H21Q22.500 12.700 22.500 14V20Q22.500 21.500 21 21.500H13.600" stroke="#f00" stroke-width="1.07" fill="none" /><path d="M7.300 16.600L10.300 14.300V15.700H17.400V14.300L20.400 16.600L17.400 18.900V17.500H10.300V18.900z" fill="#eaf2fd" stroke="#3f8ff0" stroke-width=".8"/></g><g transform="translate(548.0 92.0)"><path d="M-2 12L20 -1M9 -2L22 22M6 25L24 15M-1 10L8 18" stroke="#dcdcdc" stroke-width="0.66" fill="none" /><rect x="3.7" y="6.4" width="14.2" height="11.2" stroke="#7c7c7c" stroke-width="1.23" fill="none" rx="0"/><path d="M3.700 11.500A8 7 0 0 1 12.500 17.600" stroke="#7c7c7c" stroke-width="1.15" fill="none" /></g><g transform="translate(585.5 92.0)"><path d="M1.800 3.400H10.800" stroke="#111" stroke-width="1.15" fill="none" /><path d="M10.8 3.4L21.1 13.4" stroke="#f33" stroke-width="1.07" fill="none"/><path d="M21.100 13.400V21.800" stroke="#111" stroke-width="1.15" fill="none" /></g><g transform="translate(619.0 92.0)"><path d="M1.400 3.700H10.300" stroke="#111" stroke-width="1.15" fill="none" /><path d="M10.300 3.700A10.200 9.700 0 0 1 20.500 13.400" stroke="#f33" stroke-width="1.15" fill="none" /><path d="M20.500 13.400V21.800" stroke="#111" stroke-width="1.15" fill="none" /><circle cx="10.700" cy="13.200" r="1" fill="#1020f0"/></g><g transform="translate(658.0 92.0)"><path d="M8.600 0.600L10.600 0.300L14.300 11.300L12.200 12.400z" fill="#f6f6f6" stroke="#b0b0b0" stroke-width=".6"/><path d="M2.200 9.400L2.500 11.400L13.500 13L14.200 11z" fill="#f6f6f6" stroke="#b0b0b0" stroke-width=".6"/><path d="M-1.6 20.8L14.4 -1.3" stroke="#111" stroke-width="1.02" fill="none"/><ellipse cx="20.900" cy="11.700" rx="4" ry="2.400" transform="rotate(-14 20.900 11.700)" fill="none" stroke="#f22" stroke-width="1.700"/><ellipse cx="14.900" cy="20.600" rx="2.400" ry="3.900" transform="rotate(-10 14.900 20.600)" fill="none" stroke="#f22" stroke-width="1.700"/><path d="M13.500 12L17.200 12.400M13.500 12.500L14.300 16.800" stroke="#f22" stroke-width="1.600"/><circle cx="8.1" cy="7.6" r="1.9" fill="#f00"/></g><g transform="translate(691.0 92.0)"><path d="M8.600 0.600L10.600 0.300L14.300 11.300L12.200 12.400z" fill="#f6f6f6" stroke="#b0b0b0" stroke-width=".6"/><path d="M2.200 9.400L2.500 11.400L13.500 13L14.200 11z" fill="#f6f6f6" stroke="#b0b0b0" stroke-width=".6"/><path d="M-1.6 20.8L14.4 -1.3" stroke="#555" stroke-width="1.02" fill="none"/><ellipse cx="20.900" cy="11.700" rx="4" ry="2.400" transform="rotate(-14 20.900 11.700)" fill="none" stroke="#a8a8a8" stroke-width="1.700"/><ellipse cx="14.900" cy="20.600" rx="2.400" ry="3.900" transform="rotate(-10 14.900 20.600)" fill="none" stroke="#a8a8a8" stroke-width="1.700"/><path d="M13.500 12L17.200 12.400M13.500 12.500L14.300 16.800" stroke="#a8a8a8" stroke-width="1.600"/><path d="M8 6L9.500 8.500M3 13L4.500 15.500" stroke="#888" stroke-width="1.800"/></g><g transform="translate(723.5 92.0)"><path d="M6.800 1.300V21.800M18 1.300V21.800" stroke="#222" stroke-width="1.15" fill="none" /><path d="M-0.200 11.500H6.800M18 11.500H25" stroke="#111" stroke-width="1.39" fill="none" /><path d="M6.800 11.500H18" stroke="#555" stroke-width="0.57" fill="none" /><circle cx="6.8" cy="11.5" r="1.9" fill="#f00"/><circle cx="18" cy="11.5" r="1.9" fill="#f00"/></g><g transform="translate(757.0 92.0)"><path d="M3.300 1.300V9.200M3.300 15V21.800M14.500 1.300V21.800" stroke="#222" stroke-width="1.15" fill="none" /><path d="M14.500 8.700H21.900M14.500 15.300H21.900" stroke="#111" stroke-width="1.48" fill="none" /><path d="M5 8.700H13M5 15.300H13" stroke="#c4c4c4" stroke-width="0.74" fill="none" stroke-dasharray="1.200 1.500"/><circle cx="14.5" cy="8.7" r="1.9" fill="#f00"/><circle cx="14.5" cy="15.3" r="1.9" fill="#f00"/></g><g transform="translate(789.5 92.0)"><path d="M6.900 1.300V21.800M18 1.300V21.800" stroke="#222" stroke-width="1.15" fill="none" /><path d="M6.900 11.500H18" stroke="#111" stroke-width="1.48" fill="none" /><path d="M0.800 9.800L4.200 13.200M0.800 13.200L4.200 9.800M0 11.500H5M20.700 9.800L24.100 13.200M20.700 13.200L24.100 9.800M20 11.500H25" stroke="#4a9af0" stroke-width="0.74" fill="none" /><circle cx="6.9" cy="11.5" r="1.9" fill="#f00"/><circle cx="18" cy="11.5" r="1.9" fill="#f00"/></g><g transform="translate(823.0 92.0)"><path d="M0.5 23.4L8.4 15.5" stroke="#333" stroke-width="1.07" fill="none"/><path d="M14.7 8.7L23.4 -0.2" stroke="#333" stroke-width="1.07" fill="none"/><circle cx="11.5" cy="12.4" r="1.9" fill="#f00"/></g><g transform="translate(862.0 92.0)"><path d="M5 21.3L23.4 10.3" stroke="#555" stroke-width="1.07" fill="none"/><path d="M4.500 16.500Q9 4 20.500 7.300" stroke="#666" stroke-width="0.98" fill="none" /><path d="M3.500 20.500L2.800 15L7.500 17z" fill="#777"/><path d="M23.200 8.600L18.800 4.800L18.300 9.500z" fill="#777"/></g><g transform="translate(901.5 92.0)"><defs><linearGradient id="bg1" x1="0" y1="0" x2="1" y2="0"><stop offset="0" stop-color="#6e6e6e"/><stop offset=".5" stop-color="#9a9a9a"/><stop offset="1" stop-color="#6a6a6a"/></linearGradient></defs><path d="M5.500 7.600C8 3 10 -1 13 0.500C15 1.500 15.500 3 16 4.500" stroke="#888" stroke-width="1.15" fill="none" /><g transform="rotate(-18 18.500 13)"><rect x="14" y="3.500" width="9" height="19.500" rx="3" fill="url(#bg1)"/></g><path d="M2.500 4.500V12.500M-1.500 8.500H6.500M-0.300 5.700L5.300 11.300M-0.300 11.300L5.300 5.700" stroke="#c9c9c9" stroke-width="1"/><circle cx="2.500" cy="8.500" r="1.700" fill="#e0e0e0"/></g><g transform="translate(940.0 92.0)"><rect x="15.2" y="3.4" width="8.200" height="6.200" rx=".8" fill="#a2a2a2" stroke="#7e7e7e" stroke-width=".9"/><rect x="0.6" y="14.4" width="8.200" height="6.200" rx=".8" fill="#a2a2a2" stroke="#7e7e7e" stroke-width=".9"/><rect x="5.7" y="7.4" width="12.900" height="9" fill="#f6f6f3" stroke="#7e7e7e" stroke-width="1"/></g><g transform="translate(973.0 92.0)"><rect x="5.8" y="7.4" width="12.900" height="9" fill="#f6f6f3" stroke="#7e7e7e" stroke-width="1"/><rect x="15.3" y="3.4" width="8.200" height="6.200" rx=".8" fill="#a2a2a2" stroke="#7e7e7e" stroke-width=".9"/><rect x="0.9" y="14.4" width="8.200" height="6.200" rx=".8" fill="#a2a2a2" stroke="#7e7e7e" stroke-width=".9"/></g><g transform="translate(1012.0 92.0)"><circle cx="4.9" cy="2.300" r="2.800" fill="#fff" stroke="#7a7a7a" stroke-width=".9"/><path d="M1.1000000000000005 5.800H8.7Q10.600000000000001 5.800 10.600000000000001 8V14.500H8.5V24.300H5.4V16H4.4V24.300H1.3000000000000003V14.500H-0.7999999999999998V8Q-0.7999999999999998 5.800 1.1000000000000005 5.800z" fill="#fff" stroke="#7a7a7a" stroke-width=".9"/><path d="M-0.2999999999999998 8V14M10.100000000000001 8V14M2.1000000000000005 16V24M7.7 16V24" stroke="#9a9a9a" stroke-width="1.100"/><circle cx="19.1" cy="2.300" r="2.800" fill="#fff" stroke="#7a7a7a" stroke-width=".9"/><path d="M15.3 5.800H22.900000000000002Q24.8 5.800 24.8 8V14.500H22.700000000000003V24.300H19.6V16H18.6V24.300H15.500000000000002V14.500H13.400000000000002V8Q13.400000000000002 5.800 15.3 5.800z" fill="#fff" stroke="#7a7a7a" stroke-width=".9"/><path d="M13.900000000000002 8V14M24.3 8V14M16.3 16V24M21.900000000000002 16V24" stroke="#9a9a9a" stroke-width="1.100"/></g><g transform="translate(1045.0 92.0)"><text x="12" y="9.7" font-size="9.3" fill="#111" text-anchor="middle" font-weight="normal" font-family="Liberation Sans, sans-serif">0.00</text><path d="M6.300 16.600H17.500" stroke="#444" stroke-width="1.23" fill="none" /><path d="M-0.600 13.200L3.600 16.600L-0.600 20" stroke="#3f8ff0" stroke-width="0.82" fill="none" /><path d="M24.600 13.200L20.400 16.600L24.600 20" stroke="#8cc4f8" stroke-width="0.82" fill="none" /></g><g transform="translate(1084.0 92.0)"><rect x="2.400" y="0.300" width="16.800" height="6.300" rx="2" fill="#d2d2d2" stroke="#7a7a7a" stroke-width="1"/><path d="M19.200 2.500H20.500Q21.900 2.500 21.900 4V7.500Q21.900 9.200 20 9.300L13 9.700Q11.300 9.800 11.300 11.500V13" stroke="#7a7a7a" stroke-width="0.9" fill="none" /><rect x="8.500" y="12.900" width="5.600" height="11" rx="2.600" fill="#7a7a7a"/></g><g transform="translate(1129.0 92.0)"><text x="12" y="21.8" font-size="29" fill="#000" text-anchor="middle" font-weight="normal" font-family="Liberation Serif, serif">A</text></g><g transform="translate(1162.0 92.0)"><rect x="0.500" y="3.400" width="22.800" height="16.800" rx="1" fill="#fff" stroke="#666" stroke-width="1.200"/><path d="M3.800 17.500V13.500L7 11L9.500 13L14.500 8.500L20.500 14V17.500z" fill="#000"/><circle cx="18.800" cy="7.600" r="1.600" fill="#000"/></g><g transform="translate(1207.0 92.0)"><circle cx="12" cy="11.8" r="11.1" stroke="#111" stroke-width="0.9" fill="none"/><path d="M-1.400 11.800H25.100M12 -1.300V25" stroke="#f66" stroke-width="1.07" fill="none" stroke-dasharray="3.500 1.500 1.200 1.500"/></g><g transform="translate(1240.0 92.0)"><text x="-0.3" y="8.2" font-size="11" fill="#222" text-anchor="start" font-weight="normal" font-family="Liberation Sans, sans-serif">1</text><text x="8.2" y="16" font-size="11" fill="#222" text-anchor="start" font-weight="normal" font-family="Liberation Sans, sans-serif">2</text><text x="17.5" y="23.4" font-size="11" fill="#222" text-anchor="start" font-weight="normal" font-family="Liberation Sans, sans-serif">3</text></g><g transform="translate(1279.0 92.0)"><path d="M0 11.300H5.600L12.300 0.500V22.600L18.400 11.300H24.700" stroke="#111" stroke-width="0.9" fill="none" /><circle cx="5.6" cy="11.3" r="1.6" fill="#f00"/><circle cx="18.4" cy="11.3" r="1.6" fill="#f00"/></g><g transform="translate(1363.0 92.0)"><path d="M5.9 22.1L24.8 12.7" stroke="#f00" stroke-width="0.98" fill="none"/><path d="M2.2 12.7L19 4.5" stroke="#111" stroke-width="0.9" fill="none"/><path d="M19.0 4.5L15.8 8.0L14.3 4.8z" fill="#111"/><path d="M2.2 12.7L5.4 9.2L6.9 12.4z" fill="#111"/><path d="M0.6 10.8L4.8 19" stroke="#111" stroke-width="0.82" fill="none"/><path d="M17.9 2.2L22.1 10.3" stroke="#111" stroke-width="0.82" fill="none"/></g><g transform="translate(1396.0 92.0)"><path d="M1.5 11L19.1 3.7" stroke="#111" stroke-width="0.9" fill="none"/><path d="M19.1 3.7L15.7 7.0L14.3 3.7z" fill="#111"/><path d="M1.5 11.0L4.9 7.7L6.3 11.0z" fill="#111"/><path d="M0.7 9.2L8.3 24.4" stroke="#111" stroke-width="0.82" fill="none"/><path d="M18 0.5L22.7 8.7" stroke="#111" stroke-width="0.82" fill="none"/></g><g transform="translate(1429.0 92.0)"><path d="M2.900 5V21.800" stroke="#555" stroke-width="1.39" fill="none" /><path d="M22.300 5V13.700" stroke="#555" stroke-width="1.31" fill="none" /><path d="M2.9 7.1L22.3 7.1" stroke="#111" stroke-width="0.9" fill="none"/><path d="M22.3 7.1L17.9 8.9L17.9 5.3z" fill="#111"/><path d="M2.9 7.1L7.3 5.3L7.3 8.9z" fill="#111"/></g><g transform="translate(1462.0 92.0)"><path d="M4 1.600H12.900M4 21.500H20.800" stroke="#555" stroke-width="1.31" fill="none" /><path d="M6.3 1.6L6.3 21.5" stroke="#111" stroke-width="0.9" fill="none"/><path d="M6.3 21.5L4.5 17.1L8.1 17.1z" fill="#111"/><path d="M6.3 1.6L8.1 6.0L4.5 6.0z" fill="#111"/></g><g transform="translate(1501.0 92.0)"><path d="M2.600 3.200V23.900" stroke="#111" stroke-width="1.23" fill="none" /><path d="M21.500 3.200V19" stroke="#111" stroke-width="1.15" fill="none" /><path d="M15.400 10.300V19" stroke="#666" stroke-width="1.31" fill="none" /><path d="M2.6 4.8L21.5 4.8" stroke="#111" stroke-width="0.9" fill="none"/><path d="M21.5 4.8L17.1 6.6L17.1 3.0z" fill="#111"/><path d="M2.6 4.8L7.0 3.0L7.0 6.6z" fill="#111"/><path d="M2.6 12.7L15.4 12.7" stroke="#111" stroke-width="0.9" fill="none"/><path d="M15.4 12.7L11.0 14.5L11.0 10.9z" fill="#111"/><path d="M2.6 12.7L7.0 10.9L7.0 14.5z" fill="#111"/></g><g transform="translate(1534.0 92.0)"><path d="M0.400 3.200V23.900" stroke="#111" stroke-width="1.23" fill="none" /><path d="M12.700 3.200V19" stroke="#111" stroke-width="1.31" fill="none" /><path d="M23.500 3.200V11.600" stroke="#111" stroke-width="1.15" fill="none" /><path d="M0.4 4.8L12.7 4.8" stroke="#111" stroke-width="0.9" fill="none"/><path d="M12.7 4.8L8.3 6.6L8.3 3.0z" fill="#111"/><path d="M0.4 4.8L4.8 3.0L4.8 6.6z" fill="#111"/><path d="M12.7 4.8L23.5 4.8" stroke="#111" stroke-width="0.9" fill="none"/><path d="M23.5 4.8L19.1 6.6L19.1 3.0z" fill="#111"/><path d="M12.7 4.8L17.1 3.0L17.1 6.6z" fill="#111"/><path d="M17.0 4.8L21.4 3.0L21.4 6.6z" fill="#111"/><path d="M19.5 4.8L15.1 6.6L15.1 3.0z" fill="#111"/></g><g transform="translate(1573.0 92.0)"><text x="16.3" y="6" font-size="7.5" fill="#222" text-anchor="start" font-weight="normal" font-family="Liberation Sans, sans-serif">x</text><text x="1.5" y="20.3" font-size="8.5" fill="#222" text-anchor="start" font-weight="normal" font-family="Liberation Sans, sans-serif">y</text><path d="M18.400 6.600V22.600M6.800 18.700H22.900" stroke="#111" stroke-width="0.9" fill="none" /></g><g transform="translate(1606.0 92.0)"><path d="M4.500 17L13.500 7.900H22.700" stroke="#333" stroke-width="0.98" fill="none" /><path d="M3.3 18.1L4.8 13.9L7.5 16.6z" fill="#111"/></g><g transform="translate(1645.0 92.0)"><path d="M-1.6 12.4L11 25" stroke="#f00" stroke-width="0.98" fill="none"/><path d="M4.500 15.200L13.300 7.900H22.600" stroke="#333" stroke-width="0.98" fill="none" /><path d="M2.6 16.8L4.6 12.3L7.4 15.7z" fill="#111"/></g><g transform="translate(1678.0 92.0)"><rect x="-0.8" y="4.2" width="25.4" height="15.3" stroke="#111" stroke-width="0.98" fill="none" rx="0"/><path d="M12.7 4.2L12.7 19.5" stroke="#111" stroke-width="0.98" fill="none"/><circle cx="5.8" cy="12" r="2.6" stroke="#111" stroke-width="0.9" fill="none"/><path d="M1.800 12H9.800M5.800 8V16" stroke="#111" stroke-width="0.82" fill="none" /><text x="14.5" y="16.5" font-size="10.5" fill="#111" text-anchor="start" font-weight="normal" font-family="Liberation Sans, sans-serif">.1</text></g><g transform="translate(1717.0 92.0)"><circle cx="8.7" cy="14.8" r="7.3" stroke="#111" stroke-width="0.9" fill="none"/><path d="M9 15L17.9 1.1" stroke="#111" stroke-width="0.9" fill="none"/><path d="M12.6 9.2L13.3 4.9L16.3 6.8z" fill="#111"/><text x="18.3" y="10.8" font-size="9.5" fill="#111" text-anchor="start" font-weight="normal" font-family="Liberation Sans, sans-serif">R</text></g><g transform="translate(1749.5 92.0)"><circle cx="12.4" cy="11.8" r="10.2" stroke="#111" stroke-width="0.9" fill="none"/><path d="M3.3 16.6L21.9 7.1" stroke="#111" stroke-width="0.9" fill="none"/><path d="M21.9 7.1L18.8 10.7L17.2 7.5z" fill="#111"/><path d="M3.3 16.6L6.4 13.0L8.0 16.2z" fill="#111"/></g><g transform="translate(1789.0 92.0)"><path d="M3.7 13.4L8.2 4.5" stroke="#111" stroke-width="0.9" fill="none"/><path d="M6.800 20.200H18.900" stroke="#111" stroke-width="1.15" fill="none" /><path d="M9.400 6.500Q15.500 11 17 17.500" stroke="#111" stroke-width="0.9" fill="none" /><path d="M8.4 5.5L12.3 6.3L10.4 8.9z" fill="#111"/><path d="M17.6 19.4L15.4 16.1L18.6 15.6z" fill="#111"/></g><g transform="translate(1821.5 92.0)"><path d="M2.700 1.100V12.400" stroke="#666" stroke-width="1.48" fill="none" /><path d="M12.100 21.800H23.100" stroke="#666" stroke-width="1.48" fill="none" /><path d="M2.700 12.700C8 13 11.500 16 12.100 21.800" stroke="#f00" stroke-width="1.07" fill="none" /><path d="M5 5C13 6 19.500 12 20 19" stroke="#111" stroke-width="0.9" fill="none" /><path d="M3.4 4.6L7.4 3.6L6.8 6.9z" fill="#111"/><path d="M20.1 21.0L18.1 17.4L21.5 17.1z" fill="#111"/></g><g transform="translate(1867.5 92.0)"><g transform="translate(0 2.700)"><defs><clipPath id="hc"><path d="M3.500 2.500H22V17H1V6.500z"/></clipPath></defs><g clip-path="url(#hc)"><path d="M-12 18L2 1" stroke="#b4b4b4" stroke-width="0.74" fill="none"/><path d="M-9 18L5 1" stroke="#b4b4b4" stroke-width="0.74" fill="none"/><path d="M-6 18L8 1" stroke="#b4b4b4" stroke-width="0.74" fill="none"/><path d="M-3 18L11 1" stroke="#b4b4b4" stroke-width="0.74" fill="none"/><path d="M0 18L14 1" stroke="#b4b4b4" stroke-width="0.74" fill="none"/><path d="M3 18L17 1" stroke="#b4b4b4" stroke-width="0.74" fill="none"/><path d="M6 18L20 1" stroke="#b4b4b4" stroke-width="0.74" fill="none"/><path d="M9 18L23 1" stroke="#b4b4b4" stroke-width="0.74" fill="none"/><path d="M12 18L26 1" stroke="#b4b4b4" stroke-width="0.74" fill="none"/><path d="M15 18L29 1" stroke="#b4b4b4" stroke-width="0.74" fill="none"/><path d="M18 18L32 1" stroke="#b4b4b4" stroke-width="0.74" fill="none"/><path d="M21 18L35 1" stroke="#b4b4b4" stroke-width="0.74" fill="none"/></g><path d="M3.500 2.500H22V17H1V6.500z" fill="none" stroke="#b8b8b8" stroke-width="1"/><circle cx="14.500" cy="10.500" r="2.500" fill="#f0f0f0" stroke="#b8b8b8" stroke-width=".8"/></g></g><g transform="translate(230.0 166.0)"><rect x="0.2" y="0.1" width="14.500" height="5" rx=".8" fill="#000"/><rect x="12.4" y="3.1" width="1.100" height="1.300" fill="#ddd"/><path d="M0.2 19.200000000000003H5.5V20.8H9.7V19.200000000000003H14.7V23.900000000000002H0.2z" fill="#000"/><rect x="5.3" y="5.0" width="4.600" height="10.900" fill="#000"/><path d="M5.3 8.7l4.600 -3.200M5.3 11.5l4.600 -3.200M5.3 14.299999999999999l4.600 -3.200M5.3 17.1l4.600 -3.200" stroke="#fff" stroke-width="1"/><circle cx="17.6" cy="14.5" r="4.800000000000001" fill="none" stroke="#7c7c7c" stroke-width="3.200"/><circle cx="23.60" cy="14.50" r="1.250" fill="#7c7c7c"/><circle cx="22.45" cy="18.03" r="1.250" fill="#7c7c7c"/><circle cx="19.45" cy="20.21" r="1.250" fill="#7c7c7c"/><circle cx="15.75" cy="20.21" r="1.250" fill="#7c7c7c"/><circle cx="12.75" cy="18.03" r="1.250" fill="#7c7c7c"/><circle cx="11.60" cy="14.50" r="1.250" fill="#7c7c7c"/><circle cx="12.75" cy="10.97" r="1.250" fill="#7c7c7c"/><circle cx="15.75" cy="8.79" r="1.250" fill="#7c7c7c"/><circle cx="19.45" cy="8.79" r="1.250" fill="#7c7c7c"/><circle cx="22.45" cy="10.97" r="1.250" fill="#7c7c7c"/></g><g transform="translate(263.0 166.0)"><rect x="0.6000000000000001" y="0.1" width="14.500" height="5" rx=".8" fill="#000"/><rect x="12.8" y="3.1" width="1.100" height="1.300" fill="#ddd"/><path d="M0.6000000000000001 19.200000000000003H5.9V20.8H10.1V19.200000000000003H15.1V23.900000000000002H0.6000000000000001z" fill="#000"/><rect x="5.7" y="5.0" width="4.600" height="10.900" fill="#000"/><path d="M5.7 8.7l4.600 -3.200M5.7 11.5l4.600 -3.200M5.7 14.299999999999999l4.600 -3.200M5.7 17.1l4.600 -3.200" stroke="#fff" stroke-width="1"/><path d="M23.9 14.5L18.7 9.7V12.8H13.2V16.2H18.7V19.3z" fill="#f00"/></g><g transform="translate(302.0 166.0)"><rect x="0.5" y="0.1" width="14.500" height="5" rx=".8" fill="#6e6e6e"/><rect x="12.700000000000001" y="3.1" width="1.100" height="1.300" fill="#ddd"/><path d="M0.5 19.200000000000003H5.8V20.8H10.0V19.200000000000003H15.0V23.900000000000002H0.5z" fill="#6e6e6e"/><rect x="5.6" y="5.0" width="4.600" height="10.900" fill="#9a9a9a"/><path d="M5.6 8.7l4.600 -3.200M5.6 11.5l4.600 -3.200M5.6 14.299999999999999l4.600 -3.200M5.6 17.1l4.600 -3.200" stroke="#e8e8e8" stroke-width="1"/><path d="M23.9 14.5L18.7 9.7V12.8H13.2V16.2H18.7V19.3z" fill="#f00"/><text x="15" y="5.2" font-size="7.8" fill="#333" text-anchor="start" font-weight="normal" font-family="Liberation Sans, sans-serif">V1</text></g><g transform="translate(340.0 166.0)"><rect x="1.2" y="0.1" width="14.500" height="5" rx=".8" fill="#000"/><rect x="13.4" y="3.1" width="1.100" height="1.300" fill="#ddd"/><path d="M1.2 19.200000000000003H6.5V20.8H10.7V19.200000000000003H15.7V23.900000000000002H1.2z" fill="#000"/><rect x="6.3" y="5.0" width="4.600" height="10.900" fill="#000"/><path d="M6.3 8.7l4.600 -3.200M6.3 11.5l4.600 -3.200M6.3 14.299999999999999l4.600 -3.200M6.3 17.1l4.600 -3.200" stroke="#fff" stroke-width="1"/><path d="M13.6 14.5L18.8 9.7V12.8H24.6V16.2H18.8V19.3z" fill="#4a8a68"/></g><g transform="translate(373.0 166.0)"><text x="13.4" y="7.6" font-size="9.3" fill="#1030f0" text-anchor="middle" font-weight="normal" font-family="Liberation Sans, sans-serif">GBX</text><path d="M3.200 11.800V19.700H12.600" stroke="#111" stroke-width="1.64" fill="none" /><circle cx="3.2" cy="11.8" r="2.3" stroke="#111" stroke-width="2.13" fill="#f0f0f0"/><circle cx="12.6" cy="19.7" r="2.3" stroke="#111" stroke-width="2.13" fill="#f0f0f0"/><path d="M14.7 14.5L19.9 9.7V12.8H25.2V16.2H19.9V19.3z" fill="#4a8a68"/></g><g transform="translate(412.5 166.0)"><rect x="1.7" y="1.1" width="14.500" height="5" rx=".8" fill="#000"/><rect x="13.9" y="4.1" width="1.100" height="1.300" fill="#ddd"/><path d="M1.7 20.200000000000003H7.0V21.8H11.2V20.200000000000003H16.2V24.900000000000002H1.7z" fill="#000"/><rect x="6.8" y="6.0" width="4.600" height="10.900" fill="#000"/><path d="M6.8 9.7l4.600 -3.200M6.8 12.5l4.600 -3.200M6.8 15.299999999999999l4.600 -3.200M6.8 18.1l4.600 -3.200" stroke="#fff" stroke-width="1"/><ellipse cx="19" cy="13.500" rx="5" ry="3.200" transform="rotate(-15 19 13.500)" fill="#999" stroke="#666" stroke-width=".6"/><path d="M14.500 16.500C16 20.500 22 20.500 25 16L26 13L23.500 11.500C24 15 19 18.500 14.500 16.500z" fill="#000"/><path d="M20 15.500L22.500 13" stroke="#fff" stroke-width=".8"/></g><g transform="translate(450.5 166.0)"><path d="M-0.500 11.300L12.200 3.200L25.200 11.300L12.200 18.800z" fill="#a9a9a9"/><path d="M-0.500 11.300L12.200 18.800V20.700L-0.500 13.200z" fill="#8a8a8a"/><path d="M25.200 11.300L12.200 18.800V20.700L25.200 13.200z" fill="#9a9a9a"/><path d="M5 11.300L12.200 6.700L19.500 11.300L12.200 15.800z" fill="#b6b6b6" stroke="#9c9c9c" stroke-width=".7"/><path d="M12.200 11.300l3.600-2.300" stroke="#9c9c9c" stroke-width=".7"/></g><g transform="translate(483.5 166.0)"><path d="M-0.500 11.300L12.200 3.200L25.200 11.300L12.200 18.800z" fill="#a9a9a9"/><path d="M-0.500 11.300L12.200 18.800V20.700L-0.500 13.200z" fill="#8a8a8a"/><path d="M25.200 11.300L12.200 18.800V20.700L25.200 13.200z" fill="#9a9a9a"/><ellipse cx="9.500" cy="8.800" rx="1.500" ry="1" fill="#8c8c8c"/><ellipse cx="16.500" cy="11.300" rx="1.500" ry="1" fill="#8c8c8c"/><ellipse cx="9.500" cy="14" rx="1.500" ry="1" fill="#8c8c8c"/></g><g transform="translate(523.0 166.0)"><path d="M-1.400 7.900L12.500 -0.800L16.500 1.800L2.600 10.500z" fill="#3f78d8"/><path d="M-1.400 7.900L2.600 10.500V12L-1.400 9.400z" fill="#222"/><path d="M2.600 10.500L16.500 1.800V3.300L2.600 12z" fill="#2a5cb8"/><path d="M7.300 13.600L20.600 4.600L24.600 7.200L11.300 16.200z" fill="#3f78d8"/><path d="M7.300 13.600L11.300 16.200V17.700L7.300 15.100z" fill="#222"/><path d="M11.300 16.200L24.600 7.200V8.700L11.300 17.700z" fill="#2a5cb8"/><path d="M10 7L14 9.300" stroke="#222" stroke-width="1"/><rect x="15.400" y="15.700" width="9.600" height="9.300" fill="#000"/><text x="20.2" y="23.8" font-size="9" fill="#fff" text-anchor="middle" font-weight="normal" font-family="Liberation Sans, sans-serif">T</text></g><g transform="translate(562.0 166.0)"><rect x="-0.500" y="-0.500" width="25" height="25" rx="2" fill="#fff" stroke="#c9c9c9" stroke-width="1"/><path d="M1.500 1.500L9.500 6.500H1.500z" fill="#c9c9c9"/><rect x="11" y="4.500" width="5.800" height="9" rx=".8" fill="#9a9a9a"/><path d="M1.500 8.500H9.500V12H5V20H13.500V23H1.500z" fill="#929292"/><path d="M6.500 14.500L19 17.500V18.500H6.500z" fill="#c2c2c2"/></g><g transform="translate(595.0 166.0)"><rect x="5.2" y="4.4" width="13.6" height="15.2" stroke="#6a6a6a" stroke-width="1.07" fill="none" rx="0"/><text x="12" y="16.6" font-size="12" fill="#666" text-anchor="middle" font-weight="normal" font-family="Liberation Sans, sans-serif">N</text></g><g transform="translate(14.0 129.5)"><path d="M8 5V18.200L11 15.500L13.300 20.600L15.200 19.700L13 14.700H16.800z" fill="#f4f4f4" stroke="#8a8a8a" stroke-width="1"/></g><path d="M1902 101.500L1907 106.500M1902 106.500L1907 101.500" stroke="#222" stroke-width="1.100"/><path d="M212 176.5L216 180.5L220 176.5" fill="none" stroke="#333" stroke-width="1.1"/></svg><div class="abs" style="left:29px;top:197px;width:1px;height:766px;background:#a0a0a0"></div><div id="dochead"></div><span class="abs" style="left:703.90px;top:204.27px;font-size:11.5px;line-height:11.5px;color:#000;white-space:pre;letter-spacing:-0.121px;">* Untitled 1</span><div id="canvas"></div><svg class="abs" style="left:30px;top:221px" width="1403" height="742" viewBox="30 221 1403 742"><rect x="182" y="291.5" width="237" height="575.0" fill="none" stroke="#fff" stroke-width="2"/><polygon points="513.5,358.8 536.4,371.1 537.2,397.2 515.0,410.9 492.0,398.2 491.2,372.5" fill="none" stroke="#fff" stroke-width="1.9" stroke-linejoin="miter"/><polygon points="618.9,299.4 655.1,330.0 646.6,375.8 602.8,392.4 566.3,361.7 574.5,315.2" fill="none" stroke="#fff" stroke-width="1.9" stroke-linejoin="miter"/><polygon points="735.6,363.1 760.3,380.6 758.1,410.5 730.7,423.2 705.8,405.7 708.2,375.8" fill="none" stroke="#fff" stroke-width="1.9" stroke-linejoin="miter"/><rect x="488" y="481" width="51" height="51" fill="none" stroke="#fff" stroke-width="2"/><rect x="552" y="442" width="51" height="51" fill="none" stroke="#fff" stroke-width="2"/><rect x="626.6" y="437.4" width="51.19999999999993" height="51.0" fill="none" stroke="#fff" stroke-width="2"/><rect x="707" y="450.5" width="51" height="51.0" fill="none" stroke="#fff" stroke-width="2"/><rect x="575" y="501.7" width="51.299999999999955" height="50.900000000000034" fill="none" stroke="#fff" stroke-width="2"/><rect x="665" y="514.3" width="51.200000000000045" height="50.700000000000045" fill="none" stroke="#fff" stroke-width="2"/><rect x="493.9" y="579.7" width="87.70000000000005" height="42.0" fill="none" stroke="#fff" stroke-width="2"/><rect x="604.9" y="591.9" width="135.10000000000002" height="59.89999999999998" fill="none" stroke="#fff" stroke-width="2"/><rect x="779.4" y="569.2" width="85.30000000000007" height="74.79999999999995" fill="none" stroke="#fff" stroke-width="2"/><polygon points="541.4,704.3 570.6,760 508,757.4" fill="none" stroke="#fff" stroke-width="1.9" stroke-linejoin="miter"/><polygon points="612.9,697.8 670.9,723.8 619.6,761" fill="none" stroke="#fff" stroke-width="1.9" stroke-linejoin="miter"/><polygon points="781,701 812.9,892.8 631.3,823.9" fill="none" stroke="#fff" stroke-width="1.9" stroke-linejoin="miter"/><g stroke="#b03010" stroke-width="1" fill="none"><circle cx="62" cy="948.5" r="4.500"/><path d="M57 948.500H67M62 943.500V953.500"/></g><rect x="1056" y="797" width="325" height="121" rx="6" fill="#0000dc"/><text x="1064.800" y="905.600" font-family="DejaVu Sans, Liberation Sans, sans-serif" font-weight="bold" font-size="11.600" fill="#f5f2d8" textLength="303" lengthAdjust="spacing" xml:space="preserve">QCAD Pro 3.26.2.0  Mouse / Keyboard events</text><path d="M1064 907.600H1368" stroke="#f5f2d8" stroke-width="1"/><path d="M1013 524.500V539L1016.300 536L1019 541.200L1021 540.400L1018.700 535L1023.200 534.700z" fill="#fff"/></svg><svg class="abs" style="left:40px;top:198px" width="22" height="22"><circle cx="10.050" cy="9.650" r="5.300" fill="#fdfdfd" stroke="#8c92a2" stroke-width="2.500"/><path d="M14.300 6.300A5.300 5.300 0 0 1 14.600 12.400" stroke="#0a3a82" stroke-width="2.500" fill="none"/><path d="M13.300 13.900A5.300 5.300 0 0 1 5 11.300" stroke="#0a3a82" stroke-width="2.500" fill="none"/><path d="M7 9.600H11M10 7V12" stroke="#c4c8d0" stroke-width=".7"/><path d="M11 9.400L15 13.300" stroke="#e8a818" stroke-width="1.700"/><circle cx="15.600" cy="14.100" r="1.100" fill="#ee5a5a"/></svg><svg class="abs" style="left:1405px;top:202px" width="16" height="16"><rect x="0.600" y="0.600" width="12.800" height="12.800" rx="1.800" fill="#ee8472" stroke="#ea2e26" stroke-width="1.200"/><path d="M4 4L10 10M10 4L4 10" stroke="#fff" stroke-width="2"/></svg><div class="pressed" style="left:-2px;top:666px;width:30px;height:33px;"></div><div class="abs" style="left:0;top:676px;font-size:12px;line-height:14px;color:#000;letter-spacing:-.2px">Auto</div><div class="pressed" style="left:-2px;top:855px;width:30px;height:33px;"></div><svg class="abs" style="left:0;top:860px" width="28" height="24"><path d="M7.500 11.600H15.500M11.500 7.600V15.600" stroke="#000" stroke-width="1.200"/></svg><svg class="abs" style="left:0;top:197px" width="29" height="766" viewBox="0 197 29 766"><path d="M1 204l2.200-2.200v2.200z" fill="#a0a0a0"/><path d="M5 204l2.200-2.200v2.200z" fill="#a0a0a0"/><path d="M9 204l2.200-2.200v2.200z" fill="#a0a0a0"/><path d="M13 204l2.200-2.200v2.200z" fill="#a0a0a0"/><path d="M17 204l2.200-2.200v2.200z" fill="#a0a0a0"/><path d="M21 204l2.200-2.200v2.200z" fill="#a0a0a0"/><path d="M25 204l2.200-2.200v2.200z" fill="#a0a0a0"/><path d="M6.400 222.400H14.400M10.400 218.400V226.400" stroke="#111" stroke-width="1"/><circle cx="0" cy="245" r="2.0" fill="#f00"/><circle cx="0" cy="252.3" r="2.0" fill="#f00"/><circle cx="0" cy="259.4" r="2.0" fill="#f00"/><circle cx="0" cy="266.6" r="2.0" fill="#f00"/><circle cx="7.3" cy="245" r="2.0" fill="#f00"/><circle cx="7.3" cy="252.3" r="2.0" fill="#f00"/><circle cx="7.3" cy="259.4" r="2.0" fill="#f00"/><circle cx="7.3" cy="266.6" r="2.0" fill="#f00"/><circle cx="14.3" cy="245" r="2.0" fill="#f00"/><circle cx="14.3" cy="252.3" r="2.0" fill="#f00"/><circle cx="14.3" cy="259.4" r="2.0" fill="#f00"/><circle cx="14.3" cy="266.6" r="2.0" fill="#f00"/><circle cx="21.4" cy="245" r="2.0" fill="#f00"/><circle cx="21.4" cy="252.3" r="2.0" fill="#f00"/><circle cx="21.4" cy="259.4" r="2.0" fill="#f00"/><circle cx="21.4" cy="266.6" r="2.0" fill="#f00"/><path d="M0 275.5H25" stroke="#d0d0d0" stroke-width="1"/><path d="M8.900 284.300Q10 296 21.400 297" stroke="#111" stroke-width="1.07" fill="none" /><path d="M0.7 294L21.4 305.5" stroke="#111" stroke-width="1.07" fill="none"/><circle cx="8.9" cy="284.3" r="1.8" fill="#f00"/><circle cx="21.4" cy="297" r="1.8" fill="#f00"/><circle cx="21.4" cy="305.5" r="1.8" fill="#f00"/><circle cx="0.7" cy="294" r="1.8" fill="#f00"/><path d="M0.7 328.8L21.9 317" stroke="#111" stroke-width="0.98" fill="none"/><path d="M8.900 338.400Q10 327 21.600 325.800" stroke="#111" stroke-width="0.98" fill="none" /><circle cx="0.7" cy="328.8" r="1.8" fill="#f00"/><circle cx="5.6" cy="325.8" r="1.8" fill="#f00"/><circle cx="10.8" cy="322.9" r="1.8" fill="#f00"/><circle cx="16.2" cy="320" r="1.8" fill="#f00"/><circle cx="21.9" cy="317" r="1.8" fill="#f00"/><circle cx="8.9" cy="338.4" r="1.8" fill="#f00"/><circle cx="9.7" cy="333.5" r="1.8" fill="#f00"/><circle cx="12.6" cy="329.5" r="1.8" fill="#f00"/><circle cx="16.7" cy="326.9" r="1.8" fill="#f00"/><circle cx="21.6" cy="325.8" r="1.8" fill="#f00"/><path d="M2.7 351L12.6 362.3" stroke="#111" stroke-width="0.9" fill="none"/><path d="M12.600 362.300Q9.500 366 8.600 371.200" stroke="#111" stroke-width="1.07" fill="none" /><path d="M12.6 362.3L21.9 358.6" stroke="#111" stroke-width="1.07" fill="none"/><path d="M9.500 358.500Q13 354 17.500 359.500" stroke="#555" stroke-width="0.57" fill="none" /><circle cx="12.6" cy="362.3" r="1.8" fill="#f00"/><circle cx="14.8" cy="391" r="6.9" stroke="#111" stroke-width="0.98" fill="none"/><path d="M8.6 388.5L1.2 402.2" stroke="#111" stroke-width="0.98" fill="none"/><circle cx="8.6" cy="388.5" r="1.8" fill="#f00"/><path d="M0 426.2L21.9 416.2" stroke="#111" stroke-width="0.98" fill="none"/><path d="M8.600 437.300Q9 426 21.400 424.500" stroke="#111" stroke-width="1.07" fill="none" /><circle cx="10.6" cy="422.1" r="1.8" fill="#f00"/><circle cx="21.1" cy="437" r="1.8" fill="#f00"/><circle cx="11.1" cy="459.9" r="9.7" stroke="#111" stroke-width="0.98" fill="none"/><circle cx="11.1" cy="450.2" r="1.8" fill="#f00"/><circle cx="11.1" cy="469.8" r="1.8" fill="#f00"/><circle cx="1.2" cy="459.9" r="1.8" fill="#f00"/><circle cx="20.7" cy="459.9" r="1.8" fill="#f00"/><circle cx="11.1" cy="459.9" r="1.8" fill="#f00"/><path d="M0 479H25" stroke="#d0d0d0" stroke-width="1"/><path d="M0 500.1L21.9 488.6" stroke="#111" stroke-width="0.98" fill="none"/><path d="M8.600 509.700Q9 498 21.900 496.900" stroke="#111" stroke-width="1.07" fill="none" /><circle cx="11.1" cy="493.9" r="1.8" fill="#f00"/><circle cx="12.6" cy="500.1" r="1.8" fill="#f00"/><path d="M0 523H22.900V540.700H0" fill="none" stroke="#555" stroke-width="1.500"/><path d="M0 539.500L19 525.500" stroke="#777" stroke-width="0.74" fill="none" stroke-dasharray="4 3"/><circle cx="11.1" cy="531.9" r="1.8" fill="#f00"/><path d="M0 551.5H25" stroke="#d0d0d0" stroke-width="1"/><path d="M0.7 571.4L21.9 560.3" stroke="#111" stroke-width="0.98" fill="none"/><path d="M9.200 581Q10 569.500 21.900 568.500" stroke="#111" stroke-width="1.07" fill="none" /><circle cx="8.1" cy="567.7" r="1.8" fill="#f00"/><circle cx="12.1" cy="572.9" r="1.8" fill="#f00"/><path d="M0 565.500L6 563.800L3.500 567.500z M14.500 574.500L15.500 580.500L12.500 579z" fill="#000"/><path d="M0 568L4 565.500M14 581L14.800 576" stroke="#000" stroke-width="1"/><circle cx="7.7" cy="600.5" r="1.8" fill="#f00"/><text x="18.3" y="607" font-size="10.5" fill="#111" text-anchor="start" font-weight="normal" font-family="Liberation Sans, sans-serif">2</text><text x="-2" y="616.5" font-size="10.5" fill="#111" text-anchor="start" font-weight="normal" font-family="Liberation Sans, sans-serif">1</text><path d="M11 599L22 592.800" stroke="#111" stroke-width="0.82" fill="none" stroke-dasharray="3 2.500"/><circle cx="21.800" cy="592.800" r="1.200" fill="#000"/><path d="M0 602L5 599M0 606L3 603" stroke="#000" stroke-width="1.200"/><path d="M0 623H25" stroke="#d0d0d0" stroke-width="1"/><path d="M1.5 644.5L11.1 647.8" stroke="#111" stroke-width="0.9" fill="none"/><path d="M17.7 644.5L20.7 634.5" stroke="#111" stroke-width="0.98" fill="none"/><circle cx="16.7" cy="649.4" r="1.8" fill="#f00"/><path d="M0 662.5H25" stroke="#d0d0d0" stroke-width="1"/><path d="M0 701H25" stroke="#d0d0d0" stroke-width="1"/><text x="0" y="714.5" font-size="11.5" fill="#111" text-anchor="start" font-weight="normal" font-family="Liberation Sans, sans-serif">y</text><path d="M7.400 709.200V724.700H23.600" stroke="#444" stroke-width="0.9" fill="none" /><circle cx="21.1" cy="711.1" r="1.5" fill="#f00"/><text x="17" y="732.8" font-size="11.5" fill="#111" text-anchor="start" font-weight="normal" font-family="Liberation Sans, sans-serif">x</text><path d="M0 740.5H25" stroke="#d0d0d0" stroke-width="1"/><circle cx="3" cy="751.7" r="2.2" fill="#f00"/><circle cx="18.900" cy="751.700" r="1" fill="#000"/><circle cx="3" cy="767.500" r="1" fill="#000"/><path d="M6 751.700H17.500M3 755V766" stroke="#666" stroke-width="0.74" fill="none" stroke-dasharray="1 1"/><text x="16" y="762.4" font-size="10.5" fill="#111" text-anchor="start" font-weight="normal" font-family="Liberation Sans, sans-serif">2</text><text x="6" y="770.5" font-size="10.5" fill="#111" text-anchor="start" font-weight="normal" font-family="Liberation Sans, sans-serif">1</text><text x="10.8" y="789.7" font-size="10.5" fill="#111" text-anchor="start" font-weight="normal" font-family="Liberation Sans, sans-serif">2</text><text x="0.3" y="797" font-size="10.5" fill="#111" text-anchor="start" font-weight="normal" font-family="Liberation Sans, sans-serif">1</text><circle cx="18.900" cy="785.300" r="1" fill="#000"/><circle cx="2.700" cy="800.800" r="1" fill="#000"/><path d="M4 800.800H16M18.900 787V798" stroke="#666" stroke-width="0.74" fill="none" stroke-dasharray="1 1"/><circle cx="18.8" cy="801" r="2.2" fill="#f00"/><path d="M0 812.5H25" stroke="#d0d0d0" stroke-width="1"/><path d="M0 822.500Q2 821.600 6 821.600H22.200V841.600H7.500V838H0" fill="none" stroke="#f2a8a8" stroke-width=".9"/><circle cx="6.6" cy="829.3" r="3.3" stroke="#f08080" stroke-width="0.74" fill="none"/><path d="M10.300 836.500L17.500 829.300V836.500z" fill="none" stroke="#f08080" stroke-width=".9"/><circle cx="10.8" cy="832" r="1.6" fill="#f00"/><path d="M0 851H25" stroke="#d0d0d0" stroke-width="1"/><path d="M0 903.6L22.2 903.6" stroke="#111" stroke-width="0.9" fill="none"/><circle cx="10.6" cy="903.6" r="3.4" stroke="#f00" stroke-width="0.82" fill="none"/><path d="M7.200 903.600H14M10.600 900.200V907" stroke="#f00" stroke-width="0.82" fill="none" /><path d="M8 951.500L11 954.500L14 951.500M8 956.500L11 959.500L14 956.500" fill="none" stroke="#333" stroke-width="1.100"/></svg><svg class="abs" style="left:1877px;top:197px" width="28" height="766" viewBox="1877 197 28 766"><path d="M1881 204l2.200-2.200v2.200z" fill="#a0a0a0"/><path d="M1885 204l2.200-2.200v2.200z" fill="#a0a0a0"/><path d="M1889 204l2.200-2.200v2.200z" fill="#a0a0a0"/><path d="M1893 204l2.200-2.200v2.200z" fill="#a0a0a0"/><path d="M1897 204l2.200-2.200v2.200z" fill="#a0a0a0"/><path d="M1901 204l2.200-2.200v2.200z" fill="#a0a0a0"/><path d="M1905 204l2.200-2.200v2.200z" fill="#a0a0a0"/><text x="1893.8" y="216" font-size="11.5" fill="#111" text-anchor="start" font-weight="normal" font-family="Liberation Sans, sans-serif">x,y</text><path d="M1882 221.800H1905" stroke="#666" stroke-width="0.82" fill="none" /><circle cx="1904" cy="221.8" r="1.6" fill="#f00"/><rect x="1903" y="223" width="3" height="10" fill="#c8c8c8"/><text x="1882.4" y="250.6" font-size="11.5" fill="#111" text-anchor="start" font-weight="normal" font-family="Liberation Sans, sans-serif">@x,y</text><path d="M1882 254.600H1905" stroke="#666" stroke-width="0.82" fill="none" /><circle cx="1904" cy="254.6" r="1.6" fill="#f00"/><rect x="1903" y="256" width="3" height="10" fill="#c8c8c8"/><path d="M1881 275.5H1905" stroke="#d0d0d0" stroke-width="1"/><path d="M1885.5 290.3L1901.8 298.2" stroke="#111" stroke-width="0.9" fill="none"/><path d="M1901.8 298.2L1897.1 297.9L1898.6 294.7z" fill="#111"/><path d="M1885.5 290.3L1890.2 290.6L1888.7 293.8z" fill="#111"/><circle cx="1884.6" cy="289.8" r="1.6" fill="#f00"/><circle cx="1902.7" cy="298.7" r="1.6" fill="#f00"/><path d="M1882.7 332.6L1889.4 319.8" stroke="#f00" stroke-width="0.9" fill="none"/><path d="M1886.9 326.7L1903.7 334.8" stroke="#111" stroke-width="0.9" fill="none"/><path d="M1903.7 334.8L1899.0 334.5L1900.5 331.3z" fill="#111"/><path d="M1886.9 326.7L1891.6 327.0L1890.1 330.2z" fill="#111"/><circle cx="1904.5" cy="335.2" r="1.6" fill="#f00"/><path d="M1882.700 359.200Q1890.500 361.500 1889.400 370.300" stroke="#f00" stroke-width="0.9" fill="none" /><path d="M1898.2 350.3L1904.9 363.6" stroke="#f00" stroke-width="0.9" fill="none"/><path d="M1890.1 362.9L1901.2 357.7" stroke="#111" stroke-width="0.9" fill="none"/><path d="M1901.2 357.7L1898.0 361.2L1896.5 357.9z" fill="#111"/><path d="M1890.1 362.9L1893.3 359.4L1894.8 362.7z" fill="#111"/><path d="M1881 380.2H1905" stroke="#d0d0d0" stroke-width="1"/><path d="M1886.1 400.6L1890.8 391.7" stroke="#111" stroke-width="0.9" fill="none"/><path d="M1889.400 407.700H1901.200" stroke="#555" stroke-width="1.07" fill="none" /><path d="M1892 394Q1898.500 398.500 1900.200 405.500" stroke="#f00" stroke-width="0.9" fill="none" /><path d="M1891.0 393.0L1894.7 393.8L1893.0 396.2z" fill="#f00"/><path d="M1900.6 407.4L1898.5 404.2L1901.5 403.7z" fill="#f00"/><path d="M1881 419.5H1905" stroke="#d0d0d0" stroke-width="1"/><text x="1889" y="445" font-size="17" fill="#555" text-anchor="start" font-weight="normal" font-family="Liberation Serif, serif">Σ</text><path d="M1881 458.2H1905" stroke="#d0d0d0" stroke-width="1"/><path d="M1884.600 485.300V478.600L1893.800 470.500H1903.700V485.300z" fill="#f00" stroke="#400" stroke-width=".6"/><path d="M1887.900 520L1903.700 504.500Q1894.500 498 1887 506.500Q1883.500 512.500 1887.900 520z" fill="#f00" stroke="#400" stroke-width=".6"/><path d="M1884.600 552.500V542.200Q1885.500 534.800 1894 534.800Q1903 534.800 1903.700 542.200V552.500z" fill="#f00" stroke="#400" stroke-width=".6"/></svg><div class="ptitle" style="left:1437px;top:198px;width:251px;height:19px"></div><span class="abs" style="left:1442.20px;top:202.74px;font-size:12px;line-height:12px;color:#000;white-space:pre;letter-spacing:-0.323px;">Layer List</span><div class="ptitle" style="left:1692px;top:198px;width:184px;height:19px"></div><span class="abs" style="left:1697.90px;top:202.74px;font-size:12px;line-height:12px;color:#000;white-space:pre;letter-spacing:-0.215px;">Block List</span><div class="tbtn" style="left:1438px;width:48px"></div><div class="tbtn" style="left:1488px;width:48px"></div><div class="tbtn" style="left:1538px;width:49px"></div><div class="tbtn" style="left:1589px;width:48px"></div><div class="tbtn" style="left:1639px;width:48px"></div><div class="tbtn" style="left:1693px;width:21px;"></div><div class="tbtn" style="left:1716px;width:21px;"></div><div class="tbtn" style="left:1739px;width:21px;"></div><div class="tbtn" style="left:1762px;width:21px;background:#cdcdcd;border-color:#c6c6c6"></div><div class="tbtn" style="left:1785px;width:21px;background:#cdcdcd;border-color:#c6c6c6"></div><div class="tbtn" style="left:1808px;width:21px;"></div><div class="tbtn" style="left:1831px;width:21px;background:#cdcdcd;border-color:#c6c6c6"></div><div class="tbtn" style="left:1854px;width:21px;"></div><div class="list" style="left:1437px;top:241px;width:251px;height:174px"><div class="sw" style="top:6px;background:#fff"></div><span class="abs" style="left:25.00px;top:4.54px;font-size:12px;line-height:12px;color:#000;white-space:pre;letter-spacing:0.000px;">0</span><div class="sw" style="top:26px;background:#000"></div><span class="abs" style="left:25.00px;top:24.54px;font-size:12px;line-height:12px;color:#000;white-space:pre;letter-spacing:-0.125px;">1. Object</span><div class="sw" style="top:46px;background:#ffc8ff"></div><span class="abs" style="left:25.00px;top:44.54px;font-size:12px;line-height:12px;color:#000;white-space:pre;letter-spacing:-0.085px;">2. Hidden</span><div class="sw" style="top:66px;background:#55b4f5"></div><span class="abs" style="left:25.00px;top:64.54px;font-size:12px;line-height:12px;color:#000;white-space:pre;letter-spacing:-0.218px;">3. Center</span><div class="sw" style="top:86px;background:#96c878"></div><span class="abs" style="left:25.00px;top:84.54px;font-size:12px;line-height:12px;color:#000;white-space:pre;letter-spacing:-0.162px;">4. Dim</span><div class="sw" style="top:106px;background:#96c878"></div><span class="abs" style="left:25.00px;top:104.54px;font-size:12px;line-height:12px;color:#000;white-space:pre;letter-spacing:-0.319px;">5. Text</span><div class="sw" style="top:126px;background:#c0c0c0"></div><span class="abs" style="left:25.00px;top:124.54px;font-size:12px;line-height:12px;color:#000;white-space:pre;letter-spacing:-0.161px;">6. Hatch</span><div class="sw" style="top:146px;background:#c0c0c0"></div><span class="abs" style="left:25.00px;top:144.54px;font-size:12px;line-height:12px;color:#000;white-space:pre;letter-spacing:-0.077px;">7. Phantom</span><div class="sw" style="top:166px;background:#f5c518"></div><span class="abs" style="left:25.00px;top:164.54px;font-size:12px;line-height:12px;color:#000;white-space:pre;letter-spacing:-0.035px;">8. Auxiliary</span><div class="abs" style="left:233px;top:0;width:17px;height:172px;background:#f0f0f0"></div><div class="abs" style="left:234px;top:18px;width:15px;height:92px;background:#cdcdcd"></div></div><div class="list" style="left:1692px;top:241px;width:184px;height:174px"><span class="abs" style="left:47.40px;top:4.54px;font-size:12px;line-height:12px;color:#000;white-space:pre;letter-spacing:-0.133px;">Model (*Model_Space)</span><span class="abs" style="left:47.40px;top:24.54px;font-size:12px;line-height:12px;color:#000;white-space:pre;letter-spacing:-0.342px;">Layout1 (*Paper_Space)</span><span class="abs" style="left:47.40px;top:44.54px;font-size:12px;line-height:12px;color:#000;white-space:pre;letter-spacing:-0.602px;">1. OK!</span><span class="abs" style="left:47.40px;top:64.54px;font-size:12px;line-height:12px;color:#000;white-space:pre;letter-spacing:0.109px;">2. Attention!</span><span class="abs" style="left:47.40px;top:84.54px;font-size:12px;line-height:12px;color:#000;white-space:pre;letter-spacing:-0.586px;">3. NOT OK!</span><span class="abs" style="left:47.40px;top:104.54px;font-size:12px;line-height:12px;color:#000;white-space:pre;letter-spacing:-0.262px;">4. Break line</span></div><div class="abs" style="left:1430px;top:197px;width:475px;height:217px;overflow:hidden"><svg class="abs" style="left:0;top:0" width="475" height="220" viewBox="1430 197 475 220"><path d="M1653 203.5H1659V208.5H1653zM1653 204.5H1659" fill="none" stroke="#222" stroke-width="1"/><path d="M1651 206.5H1656V211.5H1651z" fill="#dcdcdc" stroke="#222" stroke-width="1"/><path d="M1651 207.5H1656" stroke="#222" stroke-width="1"/><path d="M1672.3999999999999 204.79999999999998L1679.2 211.6M1679.2 204.79999999999998L1672.3999999999999 211.6" stroke="#222" stroke-width="1.5"/><path d="M1840.5 203.5H1846.5V208.5H1840.5zM1840.5 204.5H1846.5" fill="none" stroke="#222" stroke-width="1"/><path d="M1838.5 206.5H1843.5V211.5H1838.5z" fill="#dcdcdc" stroke="#222" stroke-width="1"/><path d="M1838.5 207.5H1843.5" stroke="#222" stroke-width="1"/><path d="M1860.1 204.79999999999998L1866.9 211.6M1866.9 204.79999999999998L1860.1 211.6" stroke="#222" stroke-width="1.5"/><g transform="translate(1462 229.7) scale(1.0)"><path d="M-7.500 0.300C-5.500 -4.200 -1.500 -5.800 1 -5.700C4.500 -5.600 6.500 -3 7.500 -0.300C6.500 3.800 3 5.600 0 5.600C-3.500 5.600 -6 3.500 -7.500 0.300z" fill="#000"/><path d="M-4.600 -0.200C-3.500 -2.200 -1.500 -2.900 0.500 -2.800C2.800 -2.700 4.300 -1.500 5 0C4 2.600 2 3.900 0 3.800C-2.300 3.700 -3.800 2 -4.600 -0.200z" fill="#fff"/><circle cx="0.300" cy="-0.200" r="2.500" fill="#000"/><circle cx="-0.500" cy="-1" r=".7" fill="#fff" opacity=".8"/></g><g transform="translate(1512 229.7) scale(1.0)"><path d="M-7.500 0.300C-5.500 -4.200 -1.500 -5.800 1 -5.700C4.500 -5.600 6.500 -3 7.500 -0.300C6.500 3.800 3 5.600 0 5.600C-3.500 5.600 -6 3.500 -7.500 0.300z" fill="#a8a8a8"/><path d="M-4.600 -0.200C-3.500 -2.200 -1.500 -2.900 0.500 -2.800C2.800 -2.700 4.300 -1.500 5 0C4 2.600 2 3.900 0 3.800C-2.300 3.700 -3.800 2 -4.600 -0.200z" fill="#fff"/><circle cx="0.300" cy="-0.200" r="2.500" fill="#a8a8a8"/><circle cx="-0.500" cy="-1" r=".7" fill="#fff" opacity=".8"/></g><path d="M1557.0 230H1568.0M1562.5 224.5V235.5" stroke="#f00000" stroke-width="2.6"/><path d="M1607.5 230H1618.5" stroke="#f00000" stroke-width="2.6"/><g transform="translate(1663.5 230.5)"><path d="M-6.700 6.700L-5.400 3.200L3.800 -6L6.600 -3.600L-2.600 5.400z" fill="#f0a830" stroke="#b06a10" stroke-width=".5"/><path d="M-4 4L5 -4.800" stroke="#fbd48a" stroke-width=".9"/><path d="M3.800 -6L5 -7.200Q6 -7.700 7 -6.700Q7.800 -5.600 7.400 -4.800L6.600 -3.600z" fill="#e8202a"/><path d="M-6.700 6.700L-5.400 3.200L-2.600 5.400z" fill="#e8c9a0"/><path d="M-6.700 6.700l.5-1.300 1 .8z" fill="#333"/></g><g transform="translate(1703.8 229.7) scale(1.0)"><path d="M-7.500 0.300C-5.500 -4.200 -1.500 -5.800 1 -5.700C4.500 -5.600 6.500 -3 7.500 -0.300C6.500 3.800 3 5.600 0 5.600C-3.500 5.600 -6 3.500 -7.500 0.300z" fill="#000"/><path d="M-4.600 -0.200C-3.500 -2.200 -1.500 -2.900 0.500 -2.800C2.800 -2.700 4.300 -1.500 5 0C4 2.600 2 3.900 0 3.800C-2.300 3.700 -3.800 2 -4.600 -0.200z" fill="#fff"/><circle cx="0.300" cy="-0.200" r="2.500" fill="#000"/><circle cx="-0.500" cy="-1" r=".7" fill="#fff" opacity=".8"/></g><g transform="translate(1726.5 229.7) scale(1.0)"><path d="M-7.500 0.300C-5.500 -4.200 -1.500 -5.800 1 -5.700C4.500 -5.600 6.500 -3 7.500 -0.300C6.500 3.800 3 5.600 0 5.600C-3.500 5.600 -6 3.500 -7.500 0.300z" fill="#a8a8a8"/><path d="M-4.600 -0.200C-3.500 -2.200 -1.500 -2.900 0.500 -2.800C2.800 -2.700 4.300 -1.500 5 0C4 2.600 2 3.900 0 3.800C-2.300 3.700 -3.800 2 -4.600 -0.200z" fill="#fff"/><circle cx="0.300" cy="-0.200" r="2.500" fill="#a8a8a8"/><circle cx="-0.500" cy="-1" r=".7" fill="#fff" opacity=".8"/></g><path d="M1744.0 230H1755.0M1749.5 224.5V235.5" stroke="#f00000" stroke-width="2.6"/><path d="M1767.0 230H1778.0" stroke="#a2a2a2" stroke-width="2.6"/><text x="1795.5" y="234.5" font-size="11.5" fill="#a6a6a6" text-anchor="middle" font-weight="normal" font-family="Liberation Sans, sans-serif">a|b</text><g transform="translate(1818.5 230.5)"><path d="M-6.700 6.700L-5.400 3.200L3.800 -6L6.600 -3.600L-2.600 5.400z" fill="#f0a830" stroke="#b06a10" stroke-width=".5"/><path d="M-4 4L5 -4.800" stroke="#fbd48a" stroke-width=".9"/><path d="M3.800 -6L5 -7.200Q6 -7.700 7 -6.700Q7.800 -5.600 7.400 -4.800L6.600 -3.600z" fill="#e8202a"/><path d="M-6.700 6.700L-5.400 3.200L-2.600 5.400z" fill="#e8c9a0"/><path d="M-6.700 6.700l.5-1.300 1 .8z" fill="#333"/></g><path d="M1838 226.500H1842V236H1839.500M1842 236L1839.500 233.500M1842 236L1844.500 233.500" fill="none" stroke="#f4f4f4" stroke-width="2"/><path d="M1839 226.500H1842.500V235" fill="none" stroke="#b4b4b4" stroke-width="1.200"/><rect x="1859.500" y="225" width="10.500" height="10.500" fill="#f08070" stroke="#e04030" stroke-width="1"/><path d="M1861.800 227.300L1867.700 233.200M1867.700 227.300L1861.800 233.200" stroke="#fff" stroke-width="1.600"/><g transform="translate(1571 252.3)"><path d="M-6 7.300V-1.500A6 6 0 0 1 6 -1.500V7.300H1.900V-1.300A1.900 1.900 0 0 0 -1.900 -1.300V7.300z" fill="#000"/><rect x="-5" y="4.300" width="2.200" height="3" fill="#fff"/><rect x="2.800" y="4.300" width="2.200" height="3" fill="#fff"/></g><g transform="translate(1593 252)"><rect x="-3.800" y="-5.700" width="7.600" height="5" fill="#dcdcdc" stroke="#bdbdbd" stroke-width=".6"/><rect x="-6" y="-1.200" width="12" height="4.800" rx="1" fill="#c4c4c4"/><rect x="-5.600" y="2.200" width="11.200" height="3.200" rx=".8" fill="#ebebeb" stroke="#c8c8c8" stroke-width=".5"/><path d="M-3 -4.300H3M-3 -2.900H3" stroke="#c4c4c4" stroke-width=".6"/><path d="M-5.600 0.800H5.600" stroke="#b0b0b0" stroke-width=".6"/></g><g transform="translate(1615 251.8) scale(1.0)"><path d="M-7.500 0.300C-5.500 -4.200 -1.500 -5.800 1 -5.700C4.500 -5.600 6.500 -3 7.500 -0.300C6.500 3.800 3 5.600 0 5.600C-3.500 5.600 -6 3.500 -7.500 0.300z" fill="#000"/><path d="M-4.600 -0.200C-3.500 -2.200 -1.500 -2.900 0.500 -2.800C2.800 -2.700 4.300 -1.500 5 0C4 2.600 2 3.900 0 3.800C-2.300 3.700 -3.800 2 -4.600 -0.200z" fill="#fff"/><circle cx="0.300" cy="-0.200" r="2.500" fill="#000"/><circle cx="-0.500" cy="-1" r=".7" fill="#fff" opacity=".8"/></g><g transform="translate(1637 251.8)"><rect x="5.40" y="-0.80" width="1.600" height="1.600" fill="#f1dcb0"/><path d="M2.97 2.97L5.37 5.37" stroke="#f0a040" stroke-width=".8"/><rect x="-0.80" y="5.40" width="1.600" height="1.600" fill="#f1dcb0"/><path d="M-2.97 2.97L-5.37 5.37" stroke="#f0a040" stroke-width=".8"/><rect x="-7.00" y="-0.80" width="1.600" height="1.600" fill="#f1dcb0"/><path d="M-2.97 -2.97L-5.37 -5.37" stroke="#f0a040" stroke-width=".8"/><rect x="-0.80" y="-7.00" width="1.600" height="1.600" fill="#f1dcb0"/><path d="M2.97 -2.97L5.37 -5.37" stroke="#f0a040" stroke-width=".8"/><circle cx="0" cy="0" r="3.900" fill="#f5c518"/></g><g transform="translate(1659 251.8)"><path d="M-3.600 0V-2.800A3.600 3.900 0 0 1 3.600 -2.800V0" fill="none" stroke="#dcdcdc" stroke-width="2"/><rect x="-4.800" y="0" width="9.600" height="7" rx=".6" fill="#b6b6b6"/></g><g transform="translate(1549 272)"><path d="M-6.700 6.700L-5.400 3.200L3.800 -6L6.600 -3.600L-2.600 5.400z" fill="#f0a830" stroke="#b06a10" stroke-width=".5"/><path d="M-4 4L5 -4.800" stroke="#fbd48a" stroke-width=".9"/><path d="M3.800 -6L5 -7.200Q6 -7.700 7 -6.700Q7.800 -5.600 7.400 -4.800L6.600 -3.600z" fill="#e8202a"/><path d="M-6.700 6.700L-5.400 3.200L-2.600 5.400z" fill="#e8c9a0"/><path d="M-6.700 6.700l.5-1.300 1 .8z" fill="#333"/></g><g transform="translate(1571 272.3)"><path d="M-6 7.300V-1.500A6 6 0 0 1 6 -1.500V7.300H1.900V-1.300A1.900 1.900 0 0 0 -1.900 -1.300V7.300z" fill="#000"/><rect x="-5" y="4.300" width="2.200" height="3" fill="#fff"/><rect x="2.800" y="4.300" width="2.200" height="3" fill="#fff"/></g><g transform="translate(1593 272)"><rect x="-3.800" y="-5.700" width="7.600" height="5" fill="#dcdcdc" stroke="#bdbdbd" stroke-width=".6"/><rect x="-6" y="-1.200" width="12" height="4.800" rx="1" fill="#c4c4c4"/><rect x="-5.600" y="2.200" width="11.200" height="3.200" rx=".8" fill="#ebebeb" stroke="#c8c8c8" stroke-width=".5"/><path d="M-3 -4.300H3M-3 -2.900H3" stroke="#c4c4c4" stroke-width=".6"/><path d="M-5.600 0.800H5.600" stroke="#b0b0b0" stroke-width=".6"/></g><g transform="translate(1615 271.8) scale(1.0)"><path d="M-7.500 0.300C-5.500 -4.200 -1.500 -5.800 1 -5.700C4.500 -5.600 6.500 -3 7.500 -0.300C6.500 3.800 3 5.600 0 5.600C-3.500 5.600 -6 3.500 -7.500 0.300z" fill="#000"/><path d="M-4.600 -0.200C-3.500 -2.200 -1.500 -2.900 0.500 -2.800C2.800 -2.700 4.300 -1.500 5 0C4 2.600 2 3.900 0 3.800C-2.300 3.700 -3.800 2 -4.600 -0.200z" fill="#fff"/><circle cx="0.300" cy="-0.200" r="2.500" fill="#000"/><circle cx="-0.500" cy="-1" r=".7" fill="#fff" opacity=".8"/></g><g transform="translate(1637 271.8)"><rect x="5.40" y="-0.80" width="1.600" height="1.600" fill="#f1dcb0"/><path d="M2.97 2.97L5.37 5.37" stroke="#f0a040" stroke-width=".8"/><rect x="-0.80" y="5.40" width="1.600" height="1.600" fill="#f1dcb0"/><path d="M-2.97 2.97L-5.37 5.37" stroke="#f0a040" stroke-width=".8"/><rect x="-7.00" y="-0.80" width="1.600" height="1.600" fill="#f1dcb0"/><path d="M-2.97 -2.97L-5.37 -5.37" stroke="#f0a040" stroke-width=".8"/><rect x="-0.80" y="-7.00" width="1.600" height="1.600" fill="#f1dcb0"/><path d="M2.97 -2.97L5.37 -5.37" stroke="#f0a040" stroke-width=".8"/><circle cx="0" cy="0" r="3.900" fill="#f5c518"/></g><g transform="translate(1659 271.8)"><path d="M-3.600 0V-2.800A3.600 3.900 0 0 1 3.600 -2.800V0" fill="none" stroke="#dcdcdc" stroke-width="2"/><rect x="-4.800" y="0" width="9.600" height="7" rx=".6" fill="#b6b6b6"/></g><g transform="translate(1571 292.3)"><path d="M-6 7.300V-1.500A6 6 0 0 1 6 -1.500V7.300H1.900V-1.300A1.900 1.900 0 0 0 -1.900 -1.300V7.300z" fill="#000"/><rect x="-5" y="4.300" width="2.200" height="3" fill="#fff"/><rect x="2.800" y="4.300" width="2.200" height="3" fill="#fff"/></g><g transform="translate(1593 292)"><rect x="-3.800" y="-5.700" width="7.600" height="5" fill="#dcdcdc" stroke="#bdbdbd" stroke-width=".6"/><rect x="-6" y="-1.200" width="12" height="4.800" rx="1" fill="#c4c4c4"/><rect x="-5.600" y="2.200" width="11.200" height="3.200" rx=".8" fill="#ebebeb" stroke="#c8c8c8" stroke-width=".5"/><path d="M-3 -4.300H3M-3 -2.900H3" stroke="#c4c4c4" stroke-width=".6"/><path d="M-5.600 0.800H5.600" stroke="#b0b0b0" stroke-width=".6"/></g><g transform="translate(1615 291.8) scale(1.0)"><path d="M-7.500 0.300C-5.500 -4.200 -1.500 -5.800 1 -5.700C4.500 -5.600 6.500 -3 7.500 -0.300C6.500 3.800 3 5.600 0 5.600C-3.500 5.600 -6 3.500 -7.500 0.300z" fill="#000"/><path d="M-4.600 -0.200C-3.500 -2.200 -1.500 -2.900 0.500 -2.800C2.800 -2.700 4.300 -1.500 5 0C4 2.600 2 3.900 0 3.800C-2.300 3.700 -3.800 2 -4.600 -0.200z" fill="#fff"/><circle cx="0.300" cy="-0.200" r="2.500" fill="#000"/><circle cx="-0.500" cy="-1" r=".7" fill="#fff" opacity=".8"/></g><g transform="translate(1637 291.8)"><rect x="5.40" y="-0.80" width="1.600" height="1.600" fill="#f1dcb0"/><path d="M2.97 2.97L5.37 5.37" stroke="#f0a040" stroke-width=".8"/><rect x="-0.80" y="5.40" width="1.600" height="1.600" fill="#f1dcb0"/><path d="M-2.97 2.97L-5.37 5.37" stroke="#f0a040" stroke-width=".8"/><rect x="-7.00" y="-0.80" width="1.600" height="1.600" fill="#f1dcb0"/><path d="M-2.97 -2.97L-5.37 -5.37" stroke="#f0a040" stroke-width=".8"/><rect x="-0.80" y="-7.00" width="1.600" height="1.600" fill="#f1dcb0"/><path d="M2.97 -2.97L5.37 -5.37" stroke="#f0a040" stroke-width=".8"/><circle cx="0" cy="0" r="3.900" fill="#f5c518"/></g><g transform="translate(1659 291.8)"><path d="M-3.600 0V-2.800A3.600 3.900 0 0 1 3.600 -2.800V0" fill="none" stroke="#dcdcdc" stroke-width="2"/><rect x="-4.800" y="0" width="9.600" height="7" rx=".6" fill="#b6b6b6"/></g><g transform="translate(1571 312.3)"><path d="M-6 7.300V-1.500A6 6 0 0 1 6 -1.500V7.300H1.900V-1.300A1.900 1.900 0 0 0 -1.900 -1.300V7.300z" fill="#000"/><rect x="-5" y="4.300" width="2.200" height="3" fill="#fff"/><rect x="2.800" y="4.300" width="2.200" height="3" fill="#fff"/></g><g transform="translate(1593 312)"><rect x="-3.800" y="-5.700" width="7.600" height="5" fill="#dcdcdc" stroke="#bdbdbd" stroke-width=".6"/><rect x="-6" y="-1.200" width="12" height="4.800" rx="1" fill="#c4c4c4"/><rect x="-5.600" y="2.200" width="11.200" height="3.200" rx=".8" fill="#ebebeb" stroke="#c8c8c8" stroke-width=".5"/><path d="M-3 -4.300H3M-3 -2.900H3" stroke="#c4c4c4" stroke-width=".6"/><path d="M-5.600 0.800H5.600" stroke="#b0b0b0" stroke-width=".6"/></g><g transform="translate(1615 311.8) scale(1.0)"><path d="M-7.500 0.300C-5.500 -4.200 -1.500 -5.800 1 -5.700C4.500 -5.600 6.500 -3 7.500 -0.300C6.500 3.800 3 5.600 0 5.600C-3.500 5.600 -6 3.500 -7.500 0.300z" fill="#000"/><path d="M-4.600 -0.200C-3.500 -2.200 -1.500 -2.900 0.500 -2.800C2.800 -2.700 4.300 -1.500 5 0C4 2.600 2 3.900 0 3.800C-2.300 3.700 -3.800 2 -4.600 -0.200z" fill="#fff"/><circle cx="0.300" cy="-0.200" r="2.500" fill="#000"/><circle cx="-0.500" cy="-1" r=".7" fill="#fff" opacity=".8"/></g><g transform="translate(1637 311.8)"><rect x="5.40" y="-0.80" width="1.600" height="1.600" fill="#f1dcb0"/><path d="M2.97 2.97L5.37 5.37" stroke="#f0a040" stroke-width=".8"/><rect x="-0.80" y="5.40" width="1.600" height="1.600" fill="#f1dcb0"/><path d="M-2.97 2.97L-5.37 5.37" stroke="#f0a040" stroke-width=".8"/><rect x="-7.00" y="-0.80" width="1.600" height="1.600" fill="#f1dcb0"/><path d="M-2.97 -2.97L-5.37 -5.37" stroke="#f0a040" stroke-width=".8"/><rect x="-0.80" y="-7.00" width="1.600" height="1.600" fill="#f1dcb0"/><path d="M2.97 -2.97L5.37 -5.37" stroke="#f0a040" stroke-width=".8"/><circle cx="0" cy="0" r="3.900" fill="#f5c518"/></g><g transform="translate(1659 311.8)"><path d="M-3.600 0V-2.800A3.600 3.900 0 0 1 3.600 -2.800V0" fill="none" stroke="#dcdcdc" stroke-width="2"/><rect x="-4.800" y="0" width="9.600" height="7" rx=".6" fill="#b6b6b6"/></g><g transform="translate(1571 332.3)"><path d="M-6 7.300V-1.500A6 6 0 0 1 6 -1.500V7.300H1.900V-1.300A1.900 1.900 0 0 0 -1.900 -1.300V7.300z" fill="#000"/><rect x="-5" y="4.300" width="2.200" height="3" fill="#fff"/><rect x="2.800" y="4.300" width="2.200" height="3" fill="#fff"/></g><g transform="translate(1593 332)"><rect x="-3.800" y="-5.700" width="7.600" height="5" fill="#dcdcdc" stroke="#bdbdbd" stroke-width=".6"/><rect x="-6" y="-1.200" width="12" height="4.800" rx="1" fill="#c4c4c4"/><rect x="-5.600" y="2.200" width="11.200" height="3.200" rx=".8" fill="#ebebeb" stroke="#c8c8c8" stroke-width=".5"/><path d="M-3 -4.300H3M-3 -2.900H3" stroke="#c4c4c4" stroke-width=".6"/><path d="M-5.600 0.800H5.600" stroke="#b0b0b0" stroke-width=".6"/></g><g transform="translate(1615 331.8) scale(1.0)"><path d="M-7.500 0.300C-5.500 -4.200 -1.500 -5.800 1 -5.700C4.500 -5.600 6.500 -3 7.500 -0.300C6.500 3.800 3 5.600 0 5.600C-3.500 5.600 -6 3.500 -7.500 0.300z" fill="#000"/><path d="M-4.600 -0.200C-3.500 -2.200 -1.500 -2.900 0.500 -2.800C2.800 -2.700 4.300 -1.500 5 0C4 2.600 2 3.900 0 3.800C-2.300 3.700 -3.800 2 -4.600 -0.200z" fill="#fff"/><circle cx="0.300" cy="-0.200" r="2.500" fill="#000"/><circle cx="-0.500" cy="-1" r=".7" fill="#fff" opacity=".8"/></g><g transform="translate(1637 331.8)"><rect x="5.40" y="-0.80" width="1.600" height="1.600" fill="#f1dcb0"/><path d="M2.97 2.97L5.37 5.37" stroke="#f0a040" stroke-width=".8"/><rect x="-0.80" y="5.40" width="1.600" height="1.600" fill="#f1dcb0"/><path d="M-2.97 2.97L-5.37 5.37" stroke="#f0a040" stroke-width=".8"/><rect x="-7.00" y="-0.80" width="1.600" height="1.600" fill="#f1dcb0"/><path d="M-2.97 -2.97L-5.37 -5.37" stroke="#f0a040" stroke-width=".8"/><rect x="-0.80" y="-7.00" width="1.600" height="1.600" fill="#f1dcb0"/><path d="M2.97 -2.97L5.37 -5.37" stroke="#f0a040" stroke-width=".8"/><circle cx="0" cy="0" r="3.900" fill="#f5c518"/></g><g transform="translate(1659 331.8)"><path d="M-3.600 0V-2.800A3.600 3.900 0 0 1 3.600 -2.800V0" fill="none" stroke="#dcdcdc" stroke-width="2"/><rect x="-4.800" y="0" width="9.600" height="7" rx=".6" fill="#b6b6b6"/></g><g transform="translate(1571 352.3)"><path d="M-6 7.300V-1.500A6 6 0 0 1 6 -1.500V7.300H1.900V-1.300A1.900 1.900 0 0 0 -1.900 -1.300V7.300z" fill="#000"/><rect x="-5" y="4.300" width="2.200" height="3" fill="#fff"/><rect x="2.800" y="4.300" width="2.200" height="3" fill="#fff"/></g><g transform="translate(1593 352)"><rect x="-3.800" y="-5.700" width="7.600" height="5" fill="#dcdcdc" stroke="#bdbdbd" stroke-width=".6"/><rect x="-6" y="-1.200" width="12" height="4.800" rx="1" fill="#c4c4c4"/><rect x="-5.600" y="2.200" width="11.200" height="3.200" rx=".8" fill="#ebebeb" stroke="#c8c8c8" stroke-width=".5"/><path d="M-3 -4.300H3M-3 -2.900H3" stroke="#c4c4c4" stroke-width=".6"/><path d="M-5.600 0.800H5.600" stroke="#b0b0b0" stroke-width=".6"/></g><g transform="translate(1615 351.8) scale(1.0)"><path d="M-7.500 0.300C-5.500 -4.200 -1.500 -5.800 1 -5.700C4.500 -5.600 6.500 -3 7.500 -0.300C6.500 3.800 3 5.600 0 5.600C-3.500 5.600 -6 3.500 -7.500 0.300z" fill="#000"/><path d="M-4.600 -0.200C-3.500 -2.200 -1.500 -2.900 0.500 -2.800C2.800 -2.700 4.300 -1.500 5 0C4 2.600 2 3.900 0 3.800C-2.300 3.700 -3.800 2 -4.600 -0.200z" fill="#fff"/><circle cx="0.300" cy="-0.200" r="2.500" fill="#000"/><circle cx="-0.500" cy="-1" r=".7" fill="#fff" opacity=".8"/></g><g transform="translate(1637 351.8)"><rect x="5.40" y="-0.80" width="1.600" height="1.600" fill="#f1dcb0"/><path d="M2.97 2.97L5.37 5.37" stroke="#f0a040" stroke-width=".8"/><rect x="-0.80" y="5.40" width="1.600" height="1.600" fill="#f1dcb0"/><path d="M-2.97 2.97L-5.37 5.37" stroke="#f0a040" stroke-width=".8"/><rect x="-7.00" y="-0.80" width="1.600" height="1.600" fill="#f1dcb0"/><path d="M-2.97 -2.97L-5.37 -5.37" stroke="#f0a040" stroke-width=".8"/><rect x="-0.80" y="-7.00" width="1.600" height="1.600" fill="#f1dcb0"/><path d="M2.97 -2.97L5.37 -5.37" stroke="#f0a040" stroke-width=".8"/><circle cx="0" cy="0" r="3.900" fill="#f5c518"/></g><g transform="translate(1659 351.8)"><path d="M-3.600 0V-2.800A3.600 3.900 0 0 1 3.600 -2.800V0" fill="none" stroke="#dcdcdc" stroke-width="2"/><rect x="-4.800" y="0" width="9.600" height="7" rx=".6" fill="#b6b6b6"/></g><g transform="translate(1571 372.3)"><path d="M-6 7.300V-1.500A6 6 0 0 1 6 -1.500V7.300H1.900V-1.300A1.900 1.900 0 0 0 -1.900 -1.300V7.300z" fill="#000"/><rect x="-5" y="4.300" width="2.200" height="3" fill="#fff"/><rect x="2.800" y="4.300" width="2.200" height="3" fill="#fff"/></g><g transform="translate(1593 372)"><rect x="-3.800" y="-5.700" width="7.600" height="5" fill="#dcdcdc" stroke="#bdbdbd" stroke-width=".6"/><rect x="-6" y="-1.200" width="12" height="4.800" rx="1" fill="#c4c4c4"/><rect x="-5.600" y="2.200" width="11.200" height="3.200" rx=".8" fill="#ebebeb" stroke="#c8c8c8" stroke-width=".5"/><path d="M-3 -4.300H3M-3 -2.900H3" stroke="#c4c4c4" stroke-width=".6"/><path d="M-5.600 0.800H5.600" stroke="#b0b0b0" stroke-width=".6"/></g><g transform="translate(1615 371.8) scale(1.0)"><path d="M-7.500 0.300C-5.500 -4.200 -1.500 -5.800 1 -5.700C4.500 -5.600 6.500 -3 7.500 -0.300C6.500 3.800 3 5.600 0 5.600C-3.500 5.600 -6 3.500 -7.500 0.300z" fill="#000"/><path d="M-4.600 -0.200C-3.500 -2.200 -1.500 -2.900 0.500 -2.800C2.800 -2.700 4.300 -1.500 5 0C4 2.600 2 3.900 0 3.800C-2.300 3.700 -3.800 2 -4.600 -0.200z" fill="#fff"/><circle cx="0.300" cy="-0.200" r="2.500" fill="#000"/><circle cx="-0.500" cy="-1" r=".7" fill="#fff" opacity=".8"/></g><g transform="translate(1637 371.8)"><rect x="5.40" y="-0.80" width="1.600" height="1.600" fill="#f1dcb0"/><path d="M2.97 2.97L5.37 5.37" stroke="#f0a040" stroke-width=".8"/><rect x="-0.80" y="5.40" width="1.600" height="1.600" fill="#f1dcb0"/><path d="M-2.97 2.97L-5.37 5.37" stroke="#f0a040" stroke-width=".8"/><rect x="-7.00" y="-0.80" width="1.600" height="1.600" fill="#f1dcb0"/><path d="M-2.97 -2.97L-5.37 -5.37" stroke="#f0a040" stroke-width=".8"/><rect x="-0.80" y="-7.00" width="1.600" height="1.600" fill="#f1dcb0"/><path d="M2.97 -2.97L5.37 -5.37" stroke="#f0a040" stroke-width=".8"/><circle cx="0" cy="0" r="3.900" fill="#f5c518"/></g><g transform="translate(1659 371.8)"><path d="M-3.600 0V-2.800A3.600 3.900 0 0 1 3.600 -2.800V0" fill="none" stroke="#dcdcdc" stroke-width="2"/><rect x="-4.800" y="0" width="9.600" height="7" rx=".6" fill="#b6b6b6"/></g><g transform="translate(1571 392.3)"><path d="M-6 7.300V-1.500A6 6 0 0 1 6 -1.500V7.300H1.900V-1.300A1.900 1.900 0 0 0 -1.900 -1.300V7.300z" fill="#000"/><rect x="-5" y="4.300" width="2.200" height="3" fill="#fff"/><rect x="2.800" y="4.300" width="2.200" height="3" fill="#fff"/></g><g transform="translate(1593 392)"><rect x="-3.800" y="-5.700" width="7.600" height="5" fill="#dcdcdc" stroke="#bdbdbd" stroke-width=".6"/><rect x="-6" y="-1.200" width="12" height="4.800" rx="1" fill="#c4c4c4"/><rect x="-5.600" y="2.200" width="11.200" height="3.200" rx=".8" fill="#ebebeb" stroke="#c8c8c8" stroke-width=".5"/><path d="M-3 -4.300H3M-3 -2.900H3" stroke="#c4c4c4" stroke-width=".6"/><path d="M-5.600 0.800H5.600" stroke="#b0b0b0" stroke-width=".6"/></g><g transform="translate(1615 391.8) scale(1.0)"><path d="M-7.500 0.300C-5.500 -4.200 -1.500 -5.800 1 -5.700C4.500 -5.600 6.500 -3 7.500 -0.300C6.500 3.800 3 5.600 0 5.600C-3.500 5.600 -6 3.500 -7.500 0.300z" fill="#000"/><path d="M-4.600 -0.200C-3.500 -2.200 -1.500 -2.900 0.500 -2.800C2.800 -2.700 4.300 -1.500 5 0C4 2.600 2 3.900 0 3.800C-2.300 3.700 -3.800 2 -4.600 -0.200z" fill="#fff"/><circle cx="0.300" cy="-0.200" r="2.500" fill="#000"/><circle cx="-0.500" cy="-1" r=".7" fill="#fff" opacity=".8"/></g><g transform="translate(1637 391.8)"><rect x="5.40" y="-0.80" width="1.600" height="1.600" fill="#f1dcb0"/><path d="M2.97 2.97L5.37 5.37" stroke="#f0a040" stroke-width=".8"/><rect x="-0.80" y="5.40" width="1.600" height="1.600" fill="#f1dcb0"/><path d="M-2.97 2.97L-5.37 5.37" stroke="#f0a040" stroke-width=".8"/><rect x="-7.00" y="-0.80" width="1.600" height="1.600" fill="#f1dcb0"/><path d="M-2.97 -2.97L-5.37 -5.37" stroke="#f0a040" stroke-width=".8"/><rect x="-0.80" y="-7.00" width="1.600" height="1.600" fill="#f1dcb0"/><path d="M2.97 -2.97L5.37 -5.37" stroke="#f0a040" stroke-width=".8"/><circle cx="0" cy="0" r="3.900" fill="#f5c518"/></g><g transform="translate(1659 391.8)"><path d="M-3.600 0V-2.800A3.600 3.900 0 0 1 3.600 -2.800V0" fill="none" stroke="#dcdcdc" stroke-width="2"/><rect x="-4.800" y="0" width="9.600" height="7" rx=".6" fill="#b6b6b6"/></g><g transform="translate(1571 412.3)"><path d="M-6 7.300V-1.500A6 6 0 0 1 6 -1.500V7.300H1.900V-1.300A1.900 1.900 0 0 0 -1.900 -1.300V7.300z" fill="#000"/><rect x="-5" y="4.300" width="2.200" height="3" fill="#fff"/><rect x="2.800" y="4.300" width="2.200" height="3" fill="#fff"/></g><g transform="translate(1593 412)"><rect x="-3.800" y="-5.700" width="7.600" height="5" fill="#dcdcdc" stroke="#bdbdbd" stroke-width=".6"/><rect x="-6" y="-1.200" width="12" height="4.800" rx="1" fill="#c4c4c4"/><rect x="-5.600" y="2.200" width="11.200" height="3.200" rx=".8" fill="#ebebeb" stroke="#c8c8c8" stroke-width=".5"/><path d="M-3 -4.300H3M-3 -2.900H3" stroke="#c4c4c4" stroke-width=".6"/><path d="M-5.600 0.800H5.600" stroke="#b0b0b0" stroke-width=".6"/></g><g transform="translate(1615 411.8) scale(1.0)"><path d="M-7.500 0.300C-5.500 -4.200 -1.500 -5.800 1 -5.700C4.500 -5.600 6.500 -3 7.500 -0.300C6.500 3.800 3 5.600 0 5.600C-3.500 5.600 -6 3.500 -7.500 0.300z" fill="#000"/><path d="M-4.600 -0.200C-3.500 -2.200 -1.500 -2.900 0.500 -2.800C2.800 -2.700 4.300 -1.500 5 0C4 2.600 2 3.900 0 3.800C-2.300 3.700 -3.800 2 -4.600 -0.200z" fill="#fff"/><circle cx="0.300" cy="-0.200" r="2.500" fill="#000"/><circle cx="-0.500" cy="-1" r=".7" fill="#fff" opacity=".8"/></g><g transform="translate(1637 411.8)"><rect x="5.40" y="-0.80" width="1.600" height="1.600" fill="#f1dcb0"/><path d="M2.97 2.97L5.37 5.37" stroke="#f0a040" stroke-width=".8"/><rect x="-0.80" y="5.40" width="1.600" height="1.600" fill="#f1dcb0"/><path d="M-2.97 2.97L-5.37 5.37" stroke="#f0a040" stroke-width=".8"/><rect x="-7.00" y="-0.80" width="1.600" height="1.600" fill="#f1dcb0"/><path d="M-2.97 -2.97L-5.37 -5.37" stroke="#f0a040" stroke-width=".8"/><rect x="-0.80" y="-7.00" width="1.600" height="1.600" fill="#f1dcb0"/><path d="M2.97 -2.97L5.37 -5.37" stroke="#f0a040" stroke-width=".8"/><circle cx="0" cy="0" r="3.900" fill="#f5c518"/></g><g transform="translate(1659 411.8)"><path d="M-3.600 0V-2.800A3.600 3.900 0 0 1 3.600 -2.800V0" fill="none" stroke="#dcdcdc" stroke-width="2"/><rect x="-4.800" y="0" width="9.600" height="7" rx=".6" fill="#b6b6b6"/></g><path d="M1588 418L1598 408" stroke="#f01818" stroke-width="1.900"/><path d="M1674.9 252.8L1678.5 249.2L1682.1 252.8" fill="none" stroke="#555" stroke-width="1.6"/><path d="M1674.9 404.2L1678.5 407.8L1682.1 404.2" fill="none" stroke="#555" stroke-width="1.6"/><g transform="translate(1703.8 251.8) scale(1.0)"><path d="M-7.500 0.300C-5.500 -4.200 -1.500 -5.800 1 -5.700C4.500 -5.600 6.500 -3 7.500 -0.300C6.500 3.800 3 5.600 0 5.600C-3.500 5.600 -6 3.500 -7.500 0.300z" fill="#000"/><path d="M-4.600 -0.200C-3.500 -2.200 -1.500 -2.900 0.500 -2.800C2.800 -2.700 4.300 -1.500 5 0C4 2.600 2 3.900 0 3.800C-2.300 3.700 -3.800 2 -4.600 -0.200z" fill="#fff"/><circle cx="0.300" cy="-0.200" r="2.500" fill="#000"/><circle cx="-0.500" cy="-1" r=".7" fill="#fff" opacity=".8"/></g><g transform="translate(1726.2 252)"><path d="M-6.700 6.700L-5.400 3.200L3.800 -6L6.600 -3.600L-2.600 5.400z" fill="#f0a830" stroke="#b06a10" stroke-width=".5"/><path d="M-4 4L5 -4.800" stroke="#fbd48a" stroke-width=".9"/><path d="M3.800 -6L5 -7.200Q6 -7.700 7 -6.700Q7.800 -5.600 7.400 -4.800L6.600 -3.600z" fill="#e8202a"/><path d="M-6.700 6.700L-5.400 3.200L-2.600 5.400z" fill="#e8c9a0"/><path d="M-6.700 6.700l.5-1.300 1 .8z" fill="#333"/></g><g transform="translate(1703.8 271.8) scale(1.0)"><path d="M-7.500 0.300C-5.500 -4.200 -1.500 -5.800 1 -5.700C4.500 -5.600 6.500 -3 7.500 -0.300C6.500 3.800 3 5.600 0 5.600C-3.500 5.600 -6 3.500 -7.500 0.300z" fill="#000"/><path d="M-4.600 -0.200C-3.500 -2.200 -1.500 -2.900 0.500 -2.800C2.800 -2.700 4.300 -1.500 5 0C4 2.600 2 3.900 0 3.800C-2.300 3.700 -3.800 2 -4.600 -0.200z" fill="#fff"/><circle cx="0.300" cy="-0.200" r="2.500" fill="#000"/><circle cx="-0.500" cy="-1" r=".7" fill="#fff" opacity=".8"/></g><g transform="translate(1703.8 291.8) scale(1.0)"><path d="M-7.500 0.300C-5.500 -4.200 -1.500 -5.800 1 -5.700C4.500 -5.600 6.500 -3 7.500 -0.300C6.500 3.800 3 5.600 0 5.600C-3.500 5.600 -6 3.500 -7.500 0.300z" fill="#000"/><path d="M-4.600 -0.200C-3.500 -2.200 -1.500 -2.900 0.500 -2.800C2.800 -2.700 4.300 -1.500 5 0C4 2.600 2 3.900 0 3.800C-2.300 3.700 -3.800 2 -4.600 -0.200z" fill="#fff"/><circle cx="0.300" cy="-0.200" r="2.500" fill="#000"/><circle cx="-0.500" cy="-1" r=".7" fill="#fff" opacity=".8"/></g><g transform="translate(1703.8 311.8) scale(1.0)"><path d="M-7.500 0.300C-5.500 -4.200 -1.500 -5.800 1 -5.700C4.500 -5.600 6.500 -3 7.500 -0.300C6.500 3.800 3 5.600 0 5.600C-3.500 5.600 -6 3.500 -7.500 0.300z" fill="#000"/><path d="M-4.600 -0.200C-3.500 -2.200 -1.500 -2.900 0.500 -2.800C2.800 -2.700 4.300 -1.500 5 0C4 2.600 2 3.900 0 3.800C-2.300 3.700 -3.800 2 -4.600 -0.200z" fill="#fff"/><circle cx="0.300" cy="-0.200" r="2.500" fill="#000"/><circle cx="-0.500" cy="-1" r=".7" fill="#fff" opacity=".8"/></g><g transform="translate(1703.8 331.8) scale(1.0)"><path d="M-7.500 0.300C-5.500 -4.200 -1.500 -5.800 1 -5.700C4.500 -5.600 6.500 -3 7.500 -0.300C6.500 3.800 3 5.600 0 5.600C-3.500 5.600 -6 3.500 -7.500 0.300z" fill="#000"/><path d="M-4.600 -0.200C-3.500 -2.200 -1.500 -2.900 0.500 -2.800C2.800 -2.700 4.300 -1.500 5 0C4 2.600 2 3.900 0 3.800C-2.300 3.700 -3.800 2 -4.600 -0.200z" fill="#fff"/><circle cx="0.300" cy="-0.200" r="2.500" fill="#000"/><circle cx="-0.500" cy="-1" r=".7" fill="#fff" opacity=".8"/></g><g transform="translate(1703.8 351.8) scale(1.0)"><path d="M-7.500 0.300C-5.500 -4.200 -1.500 -5.800 1 -5.700C4.500 -5.600 6.500 -3 7.500 -0.300C6.500 3.800 3 5.600 0 5.600C-3.500 5.600 -6 3.500 -7.500 0.300z" fill="#000"/><path d="M-4.600 -0.200C-3.500 -2.200 -1.500 -2.900 0.500 -2.800C2.800 -2.700 4.300 -1.500 5 0C4 2.600 2 3.900 0 3.800C-2.300 3.700 -3.800 2 -4.600 -0.200z" fill="#fff"/><circle cx="0.300" cy="-0.200" r="2.500" fill="#000"/><circle cx="-0.500" cy="-1" r=".7" fill="#fff" opacity=".8"/></g></svg></div><div class="vtab" style="top:419px;height:85px;background:#fff;border-color:#fff;left:1437px;width:22px"><span>Property ...</span></div><div class="vtab" style="top:504px;height:77px;"><span>Selection ...</span></div><div class="vtab" style="top:581px;height:85px;"><span>Library Br...</span></div><div class="vtab" style="top:666px;height:52px;"><span>Ve...</span></div><div class="vtab" style="top:718px;height:82px;"><span>CAM Tool...</span></div><div class="vtab" style="top:800px;height:83px;"><span>CAM Simul...</span></div><div class="vtab" style="top:883px;height:79px;"><span>Comman...</span></div><div class="ptitle" style="left:1459px;top:420px;width:417px;height:19px"></div><span class="abs" style="left:1463.10px;top:424.54px;font-size:12px;line-height:12px;color:#000;white-space:pre;letter-spacing:-0.056px;">Property Editor</span><div class="abs" style="left:1458px;top:441px;width:418px;height:522px;border:1px solid #828790;background:#f0f0f0"></div><span class="abs" style="left:1467.30px;top:456.39px;font-size:11px;line-height:11px;color:#000;white-space:pre;letter-spacing:-0.201px;">Selection:</span><div class="combo" style="left:1521px;top:452px;width:345px;height:19px"></div><span class="abs" style="left:1524.90px;top:456.39px;font-size:11px;line-height:11px;color:#000;white-space:pre;letter-spacing:-0.175px;">All (2)</span><div class="grp" style="left:1468px;top:483px;width:398px;height:175px"><i style="position:absolute;left:6px;top:-6px;width:94px;height:12px;background:#f0f0f0"></i></div><span class="abs" style="left:1476.30px;top:478.69px;font-size:11px;line-height:11px;color:#000;white-space:pre;letter-spacing:-0.168px;">General Properties</span><span class="abs" style="left:1519.30px;top:503.69px;font-size:11px;line-height:11px;color:#838383;white-space:pre;letter-spacing:0.055px;">Layer:</span><span class="abs" style="left:1521.30px;top:526.69px;font-size:11px;line-height:11px;color:#000;white-space:pre;letter-spacing:-0.074px;">Color:</span><span class="abs" style="left:1495.20px;top:549.49px;font-size:11px;line-height:11px;color:#000;white-space:pre;letter-spacing:-0.059px;">Lineweight:</span><span class="abs" style="left:1505.30px;top:572.49px;font-size:11px;line-height:11px;color:#000;white-space:pre;letter-spacing:0.028px;">Linetype:</span><span class="abs" style="left:1477.20px;top:594.69px;font-size:11px;line-height:11px;color:#838383;white-space:pre;letter-spacing:-0.148px;">Linetype Scale:</span><span class="abs" style="left:1490.40px;top:616.89px;font-size:11px;line-height:11px;color:#838383;white-space:pre;letter-spacing:-0.009px;">Draw Order:</span><span class="abs" style="left:1513.20px;top:638.69px;font-size:11px;line-height:11px;color:#000;white-space:pre;letter-spacing:-0.131px;">Handle:</span><div class="combo" style="left:1557px;top:498px;width:270px;height:20px;background:#cccccc;border-color:#bfbfbf"></div><div class="combo" style="left:1834px;top:498px;width:21px;height:20px;background:#cccccc;border-color:#bfbfbf"></div><div class="combo" style="left:1557px;top:521.5px;width:299px;height:19px"></div><div class="combo" style="left:1557px;top:544.5px;width:299px;height:19px"></div><div class="combo" style="left:1557px;top:567.5px;width:299px;height:19px"></div><span class="abs" style="left:1580.20px;top:526.69px;font-size:11px;line-height:11px;color:#000;white-space:pre;letter-spacing:-0.239px;">By Layer</span><span class="abs" style="left:1580.20px;top:549.49px;font-size:11px;line-height:11px;color:#000;white-space:pre;letter-spacing:-0.239px;">By Layer</span><span class="abs" style="left:1560.00px;top:572.49px;font-size:11px;line-height:11px;color:#000;white-space:pre;letter-spacing:-0.239px;">By Layer</span><div class="edit" style="left:1557px;top:589.5px;width:299px;height:19px;background:#f0f0f0;border-color:#d9d9d9"></div><div class="edit" style="left:1557px;top:612px;width:299px;height:19px;background:#f0f0f0;border-color:#d9d9d9"></div><div class="edit" style="left:1557px;top:633.5px;width:299px;height:19px"></div><span class="abs" style="left:1560.00px;top:638.69px;font-size:11px;line-height:11px;color:#8a8a8a;white-space:pre;letter-spacing:-0.049px;">*VARIES*</span><div class="grp" style="left:1468px;top:673px;width:398px;height:44px"><i style="position:absolute;left:6px;top:-6px;width:92px;height:12px;background:#f0f0f0"></i></div><span class="abs" style="left:1476.30px;top:667.69px;font-size:11px;line-height:11px;color:#000;white-space:pre;letter-spacing:-0.200px;">Specific Properties</span><span class="abs" style="left:1477.20px;top:693.69px;font-size:11px;line-height:11px;color:#000;white-space:pre;letter-spacing:-0.400px;">Name:</span><div class="edit" style="left:1515px;top:689.500px;width:341px;height:19px"></div><span class="abs" style="left:1518.10px;top:693.69px;font-size:11px;line-height:11px;color:#000;white-space:pre;letter-spacing:-0.062px;">*VARIES*</span><div class="grp" style="left:1468px;top:732px;width:398px;height:43px"><i style="position:absolute;left:6px;top:-6px;width:40px;height:12px;background:#f0f0f0"></i></div><span class="abs" style="left:1476.50px;top:727.09px;font-size:11px;line-height:11px;color:#000;white-space:pre;letter-spacing:-0.366px;">Custom</span><div class="combo" style="left:1838px;top:749px;width:17px;height:16px;padding:0"></div><svg class="abs" style="left:1430px;top:415px" width="475" height="400" viewBox="1430 415 475 400"><path d="M1840.5 425.5H1846.5V430.5H1840.5zM1840.5 426.5H1846.5" fill="none" stroke="#222" stroke-width="1"/><path d="M1838.5 428.5H1843.5V433.5H1838.5z" fill="#dcdcdc" stroke="#222" stroke-width="1"/><path d="M1838.5 429.5H1843.5" stroke="#222" stroke-width="1"/><path d="M1860.1 426.6L1866.9 433.4M1866.9 426.6L1860.1 433.4" stroke="#222" stroke-width="1.5"/><path d="M1852.8 459.5L1856.8 463.5L1860.8 459.5" fill="none" stroke="#333" stroke-width="1.1"/><path d="M1814.4 507.2L1818 510.8L1821.6 507.2" fill="none" stroke="#b0b0b0" stroke-width="1"/><path d="M1842.5 529.5L1846.5 533.5L1850.5 529.5" fill="none" stroke="#333" stroke-width="1.1"/><path d="M1842.5 552.5L1846.5 556.5L1850.5 552.5" fill="none" stroke="#333" stroke-width="1.1"/><path d="M1842.5 575.5L1846.5 579.5L1850.5 575.5" fill="none" stroke="#333" stroke-width="1.1"/><path d="M1838 504H1851M1838 508H1851M1838 512H1851" stroke="#b4b4b4" stroke-width="1.200"/><rect x="1562.500" y="526.500" width="15" height="9" fill="#fff" stroke="#000" stroke-width="1"/><path d="M1562 554.500H1577.500" stroke="#000" stroke-width="1"/><path d="M1842 757H1851M1846.500 752.500V761.500" stroke="#e80000" stroke-width="1.800"/></svg><span class="abs" style="left:270.30px;top:981.42px;font-size:12.5px;line-height:12.5px;color:#000;white-space:pre;letter-spacing:0.183px;">Select entity or region</span><span class="abs" style="left:851.60px;top:981.42px;font-size:12.5px;line-height:12.5px;color:#000;white-space:pre;letter-spacing:0.045px;">No entities selected.</span><svg class="abs" style="left:405px;top:966px" width="30" height="38"><path d="M5.400 11.500Q5.400 4.500 14 4.500Q22.600 4.500 22.600 11.500V25Q22.600 33.500 14 33.500Q5.400 33.500 5.400 25z" fill="#f8f8f8" stroke="#555" stroke-width="1"/><path d="M5.400 18.500Q14 15 22.600 18.500M14 14V17" stroke="#555" stroke-width="1.100" fill="none"/><rect x="12.600" y="6" width="3" height="7.500" rx="1.500" fill="#f8f8f8" stroke="#444" stroke-width="1"/></svg><div class="abs" style="left:0;top:1008px;width:1072px;height:7px;background:#dcdcdc"></div><div class="abs" style="left:1120px;top:1008px;width:785px;height:7px;background:#dcdcdc"></div><span class="abs" style="left:1803.00px;top:1011.72px;font-size:12.5px;line-height:12.5px;color:#000;white-space:pre;letter-spacing:0.000px;">10.00 Mi</span></body></html>
